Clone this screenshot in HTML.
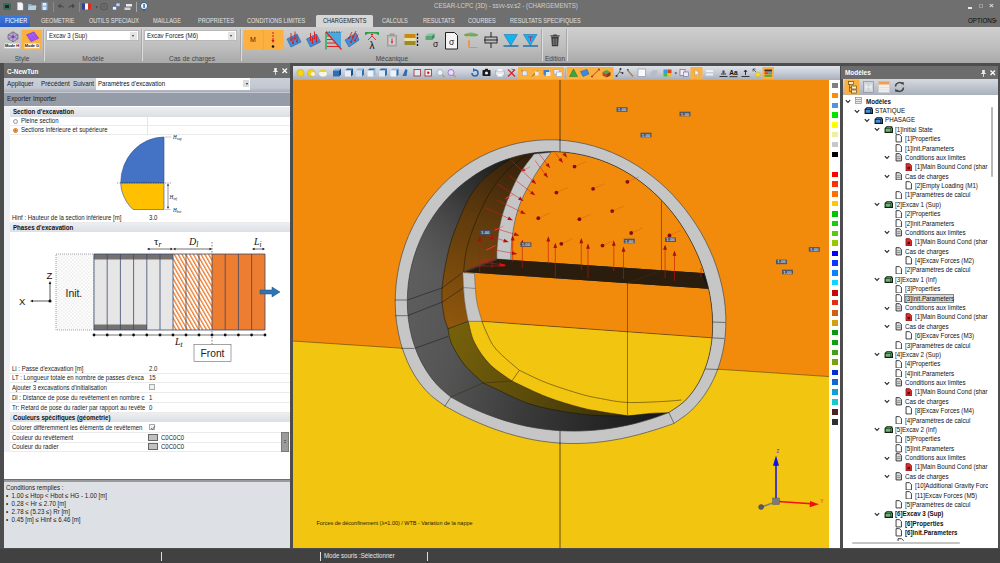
<!DOCTYPE html>
<html lang="fr">
<head>
<meta charset="utf-8">
<title>CESAR-LCPC (3D) - ssvv-sv.s2 - (CHARGEMENTS)</title>
<style>
*{box-sizing:border-box;margin:0;padding:0}
html,body{width:1000px;height:563px;overflow:hidden;background:#4b4b4b;font-family:"Liberation Sans",sans-serif;font-size:7px;color:#111}
.abs{position:absolute}
#app{position:relative;width:1000px;height:563px;overflow:hidden;background:#4d4d4d}
/* title + tabs */
#title{left:0;top:0;width:1000px;height:14px;background:#6f6f6f}
#tabs{left:0;top:14px;width:1000px;height:13px;background:#6f6f6f}
.tab{position:absolute;top:0;height:13px;line-height:13.5px;font-size:6.9px;color:#e4e4e4;white-space:nowrap;transform-origin:0 50%;transform:scaleX(.81)}
#ribbon{left:0;top:27px;width:1000px;height:36px;background:linear-gradient(#cfcfcf,#bebebe 55%,#a9a9a9)}
.rlabel{position:absolute;top:27.5px;font-size:6.6px;color:#444;white-space:nowrap;transform:translateX(-50%)}
.rsep{position:absolute;top:2px;width:1px;height:32px;background:#a8a8a8;box-shadow:1px 0 0 #dcdcdc}
.combo{position:absolute;top:2.5px;height:11.5px;background:#fff;border:0.5px solid #b8b8b8;font-size:7px;line-height:10.5px;padding-left:2px;white-space:nowrap;color:#222}
.combo span{display:inline-block;transform-origin:0 50%;transform:scaleX(.87)}
.combo i{position:absolute;right:1px;top:1.5px;width:7px;height:8px;background:#e4e4e4}
.combo i:after{content:"";position:absolute;left:2px;top:3px;border:1.5px solid transparent;border-top:2px solid #333}
/* panels */
.ptitle{position:absolute;height:14px;background:#6c6c6c;color:#fff;font-weight:bold;font-size:7px;line-height:14px;padding-left:2.5px;white-space:nowrap}
.ptitle span{display:inline-block;transform-origin:0 50%;transform:scaleX(.92)}

.sx{display:inline-block;transform-origin:0 50%;transform:scaleX(.9);white-space:nowrap}
.lt{position:absolute;font-size:7px;color:#1a1a1a;white-space:nowrap;transform-origin:0 50%;transform:scaleX(.9)}
.sh{position:absolute;left:7px;width:280px;height:9.5px;line-height:9.5px;background:linear-gradient(#eceef1,#dcdfe4);font-weight:bold;font-size:7px;padding-left:2.5px;white-space:nowrap;color:#111}
.row{position:absolute;left:9px;width:134px;height:9.5px;line-height:9.5px;font-size:6.7px;white-space:nowrap;overflow:hidden;color:#1a1a1a}
.val{position:absolute;left:146px;height:9.5px;line-height:9.5px;font-size:6.7px;color:#1a1a1a;transform-origin:0 50%;transform:scaleX(.9)}
.rad{display:inline-block;position:relative;left:1px;top:1px;width:5px;height:5px;border-radius:50%;border:.7px solid #999;background:#f4f4f4}
.rad.on{border-color:#c87820;background:radial-gradient(#e86a10 45%,#fbd9a0 55%)}
.chk{position:absolute;left:146px;width:6px;height:6px;border:.7px solid #aaa;background:#f0f0f0}
.sw{position:absolute;left:145px;width:10px;height:7px;border:.7px solid #666;background:#c0c0c0}
.info{font-size:6.7px;line-height:8.1px;color:#1a1a1a;white-space:nowrap;transform-origin:0 0;transform:scaleX(.92)}

.tt{position:absolute;font-size:6.7px;line-height:9.4px;height:9.4px;white-space:nowrap;color:#111;transform-origin:0 50%;transform:scaleX(.93)}
.ti{display:block}
#status{left:0;top:548.5px;width:1000px;height:14.5px;background:#414141}
</style>
</head>
<body>
<div id="app">
<div id="title" class="abs">
<svg class="abs" style="left:0;top:0" width="160" height="14" viewBox="0 0 160 14">
<rect x="3" y="3" width="8" height="7" rx="1.5" fill="#3c6b55"/><rect x="5" y="5" width="4" height="3" fill="#223"/>
<path d="M17.5 2.5h4l1.5 1.5v6h-5.5z" fill="#f4f6fa" stroke="#c8d0dc" stroke-width=".4"/>
<path d="M28 4h3l1 1h4v5h-8z" fill="#8fb0cc"/><path d="M29 6h7.5l-1 4H28z" fill="#b8d0e4"/>
<rect x="41.500" y="2.500" width="6" height="7.500" fill="#9fb6d6" stroke="#6c86ac" stroke-width=".5"/><rect x="43" y="3" width="3" height="2.500" fill="#e6eef8"/><rect x="43" y="7" width="3" height="3" fill="#dfe6f0"/>
<rect x="53" y="2" width="1" height="10" fill="#8a8a8a"/>
<path d="M57.500 6l3-2.500v1.700c2 0 3.500 1 3.500 3-1-1.200-2-1.500-3.500-1.500v1.800z" fill="#4c4c4c"/>
<path d="M75 6l-3-2.500v1.700c-2 0-3.500 1-3.500 3 1-1.200 2-1.500 3.500-1.500v1.800z" fill="#474747"/>
<rect x="79" y="2" width="1" height="10" fill="#8a8a8a"/>
<rect x="82" y="3.500" width="3" height="6" fill="#2b3f9e"/><rect x="85" y="3.500" width="3" height="6" fill="#f4f4f4"/><rect x="88" y="3.500" width="3" height="6" fill="#e0281e"/>
<path d="M95.500 6.500h2.400l-1.200 1.500z" fill="#333"/>
<circle cx="104" cy="6.500" r="3.200" fill="none" stroke="#5c5c5c" stroke-width="1.300"/><circle cx="104" cy="6.500" r="1" fill="#5a5a5a"/>
<rect x="112.500" y="6.500" width="4" height="3.500" fill="#f2f2f2" stroke="#55688c" stroke-width=".6"/><rect x="116" y="3" width="4" height="3.500" fill="#bcd2f0" stroke="#55688c" stroke-width=".6"/>
<rect x="126" y="4" width="6" height="2.500" fill="#e8eaee"/><rect x="124.500" y="7.500" width="6" height="2.500" fill="#d0d4dc"/>
<rect x="136" y="2" width="1" height="10" fill="#a8a8a8"/>
<circle cx="144" cy="6" r="3.600" fill="#f2f4f8" stroke="#2b5e92" stroke-width="1"/><rect x="143.400" y="4" width="1.300" height="4" fill="#1d4f88"/><path d="M143 9.500h2l-1 2z" fill="#1d4f88"/>
</svg>
<div class="abs" style="left:433.500px;top:2px;font-size:7px;color:#d0d0d0;white-space:nowrap;transform-origin:0 50%;transform:scaleX(.875)">CESAR-LCPC (3D) - ssvv-sv.s2 - (CHARGEMENTS)</div>
<div class="abs" style="left:968px;top:7px;width:4px;height:1.500px;background:#e8e8e8"></div>
<div class="abs" style="left:979px;top:4px;width:4px;height:4px;border:1px solid #9a9a9a;border-top-width:1.500px"></div>
<div class="abs" style="left:989px;top:1px;font-size:8px;color:#ddd;font-weight:bold">×</div>
</div>
<div id="tabs" class="abs">
<div class="abs" style="left:0;top:0.500px;width:30px;height:12.500px;background:linear-gradient(#3d7ae0,#2a5fc4);border-radius:1px 1px 0 0"></div>
<div class="abs" style="left:316px;top:1px;width:57px;height:13px;background:#d6d6d6;border-radius:1.500px 1.500px 0 0"></div>
<span class="tab" style="left:4.500px;color:#fff">FICHIER</span>
<span class="tab" style="left:41px;color:#e2e2e2">GEOMETRIE</span>
<span class="tab" style="left:89px;color:#e2e2e2">OUTILS SPECIAUX</span>
<span class="tab" style="left:153px;color:#e2e2e2">MAILLAGE</span>
<span class="tab" style="left:198px;color:#e2e2e2">PROPRIETES</span>
<span class="tab" style="left:247px;color:#e2e2e2">CONDITIONS LIMITES</span>
<span class="tab" style="left:323px;color:#222">CHARGEMENTS</span>
<span class="tab" style="left:382px;color:#e2e2e2">CALCULS</span>
<span class="tab" style="left:423px;color:#e2e2e2">RESULTATS</span>
<span class="tab" style="left:468px;color:#e2e2e2">COURBES</span>
<span class="tab" style="left:510px;color:#e2e2e2">RESULTATS SPECIFIQUES</span>
<span class="tab" style="left:968px;color:#0a0a0a;transform:scaleX(.9)">OPTIONS</span><span class="abs" style="left:995px;top:6px;border:1.500px solid transparent;border-top:2px solid #222"></span>
</div>
<div id="ribbon" class="abs">
<!-- Style group -->
<svg class="abs" style="left:0;top:0" width="45" height="26" viewBox="0 0 45 26">
<rect x="21.500" y="2.800" width="20.500" height="20" fill="#fbb040"/>
<g transform="translate(13,9.800)"><path d="M-5-2l5-3 5 3v4l-5 3-5-3z" fill="#b9a6d6" stroke="#555" stroke-width=".6"/><path d="M-5-2l10 4M5-2l-10 4M0-5v10" stroke="#555" stroke-width=".5"/><circle r="1.300" fill="#8a2be2"/></g>
<path d="M26.500 7.800l7.500-3 4.800 6.500-7.800 3.500z" fill="#9b4ff0" stroke="#7a36c8" stroke-width=".5"/><path d="M28.500 6.200l5 7M31 5.200l5 7M27.800 9.600l8-3" stroke="#b27af6" stroke-width=".4"/>
<rect x="4.500" y="16.500" width="15" height="4.800" fill="#f6f6f6"/><rect x="24.500" y="16.500" width="15" height="4.800" fill="#fff6e6"/>
<text x="12" y="20.400" font-size="3.900" font-weight="bold" text-anchor="middle" fill="#111" font-family="Liberation Sans, sans-serif">Mode H</text>
<text x="32" y="20.400" font-size="3.900" font-weight="bold" text-anchor="middle" fill="#111" font-family="Liberation Sans, sans-serif">Mode G</text>
</svg>
<span class="rlabel" style="left:22px">Style</span>
<div class="rsep" style="left:43px"></div>
<div class="combo" style="left:46px;width:93px"><span>Excav 3 (Sup)</span><i></i></div>
<span class="rlabel" style="left:93px">Modèle</span>
<div class="rsep" style="left:141px"></div>
<div class="combo" style="left:144px;width:93px"><span>Excav Forces (M6)</span><i></i></div>
<span class="rlabel" style="left:192px">Cas de charges</span>
<div class="rsep" style="left:240px"></div>
<!-- Mecanique group -->
<svg class="abs" style="left:240px;top:0" width="330" height="26" viewBox="0 0 330 26">
<rect x="3.500" y="3" width="40" height="20" fill="#fbb040"/><rect x="23" y="3" width=".6" height="20" fill="#f6a02c"/>
<text x="13" y="15" font-size="7" text-anchor="middle" fill="#4a2a00" font-family="Liberation Sans, sans-serif">M</text>
<path d="M33 5v9" stroke="#d01818" stroke-width="1" stroke-dasharray="2 1"/><path d="M31.500 13h3l-1.500 3z" fill="#d01818"/><circle cx="33" cy="19.500" r="1.300" fill="#111"/>
<g id="ld1"><path d="M47 12l10-5 4 8-10 5z" fill="#3f8fd8" stroke="#1c5fa8" stroke-width=".6"/><path d="M51 6v7M55 4.500v7M53 10v6M57 8.500v6" stroke="#e01818" stroke-width=".9"/><circle cx="51" cy="13" r="1" fill="#e01818"/><circle cx="55" cy="11.500" r="1" fill="#e01818"/><circle cx="53" cy="16" r="1" fill="#e01818"/><circle cx="57" cy="14.500" r="1" fill="#e01818"/></g>
<use href="#ld1" x="19.500"/>
<path d="M86 5h15v17z" fill="#49a8e0"/><path d="M86 5v17.500" stroke="#18b050" stroke-width="1.400"/><path d="M86 5l15.500 17.500" stroke="#e02020" stroke-width="1.200"/><path d="M86 5h15.500" stroke="#333" stroke-width=".8" stroke-dasharray="1.500 1"/><path d="M87 9h3M87 12.500h6M87 16h9M87 19.500h12" stroke="#e02020" stroke-width="1"/>
<g transform="translate(58,0)"><path d="M47 13l11-7 3 7-10 7z" fill="#3f8fd8" stroke="#1c5fa8" stroke-width=".6"/><path d="M54 5l-3 6M58 4l-3 6M56 9l-3 6M60 7.500l-3 6" stroke="#e01818" stroke-width=".9"/><circle cx="51" cy="11" r="1" fill="#e01818"/><circle cx="55" cy="10" r="1" fill="#e01818"/><circle cx="53" cy="15" r="1" fill="#e01818"/><circle cx="57" cy="13.500" r="1" fill="#e01818"/></g>
<path d="M125 5h14v3.500c-3-3-11-3-14 0z" fill="#2e9e4a"/><path d="M128 13l4-4 4 4" stroke="#e02020" stroke-width=".9" fill="none"/><circle cx="132" cy="7.500" r="1.100" fill="#e02020"/><text x="132" y="21.500" font-size="10" text-anchor="middle" fill="#111" font-family="Liberation Sans, sans-serif">λ</text>
<rect x="147.500" y="8.500" width="9" height="10.500" fill="#b4b4b4" stroke="#8a8a8a" stroke-width=".6"/><rect x="149.500" y="6.500" width="5" height="2" fill="#9a9a9a"/><rect x="149" y="10.500" width="6" height="7" fill="#d0d0d0"/><path d="M152 11.500v4" stroke="#e02020" stroke-width="1"/><path d="M150.700 14.500h2.600l-1.300 2.300z" fill="#e02020"/>
<rect x="164.500" y="7" width="11" height="4" fill="#c88a10"/><rect x="164.500" y="11" width="11" height="3" fill="#f0e0a0"/><rect x="164.500" y="14" width="11" height="4" fill="#9a8a28"/><path d="M177.500 6.500v12.500" stroke="#111" stroke-width="1.300" stroke-dasharray="2 1.500"/>
<path d="M185.500 9l3-2.500h6l-2.500 2.500z" fill="#7fc89a"/><path d="M185.500 9h6.500v4h-6.500z" fill="#5aa878"/><path d="M192 9l2.500-2.500v4L192 13z" fill="#3f8860"/><text x="195.500" y="19.500" font-size="8.500" text-anchor="middle" fill="#111" font-family="Liberation Sans, sans-serif">σ</text>
<path d="M205.500 5.500h9l3 3v13.500h-12z" fill="#f4f4f4" stroke="#222" stroke-width="1"/><text x="211.500" y="17.500" font-size="8.500" text-anchor="middle" fill="#111" font-family="Liberation Sans, sans-serif">σ</text>
<path d="M224 8c2-3.500 12-3.500 14 0l-2 1.500h-10z" fill="#5ac878"/><path d="M224 8h14" stroke="#c86040" stroke-width=".8"/><path d="M229 9v11" stroke="#d8c090" stroke-width="2"/><path d="M229 13v7" stroke="#f08030" stroke-width="1.200"/><path d="M229 20.500h8" stroke="#e08060" stroke-width=".8"/>
<rect x="245" y="10" width="12" height="6" fill="#bdbdbd" stroke="#222" stroke-width=".9"/><path d="M244 13h14M251 5v5M251 16v5" stroke="#222" stroke-width="1"/>
<g id="wt"><path d="M264 7.500h13.500l-6.750 11z" fill="#12b4f0" stroke="#1468a8" stroke-width=".5"/><path d="M263.500 19h15" stroke="#12609a" stroke-width="1.300"/></g>
<use href="#wt" x="19.500"/><path d="M288 10h5M290.500 10v4" stroke="#c02060" stroke-width=".8"/>
</svg>
<span class="rlabel" style="left:392px">Mécanique</span>
<div class="rsep" style="left:541px"></div>
<svg class="abs" style="left:547.500px;top:5.500px" width="14" height="15" viewBox="0 0 16 18"><path d="M3.500 4.500h9l-.8 11.500h-7.400z" fill="#3a3a3a"/><path d="M2.500 3.500h11" stroke="#222" stroke-width="1.200"/><path d="M6 2.500h4" stroke="#222" stroke-width="1.200"/><path d="M6 6.500v8M8 6.500v8M10 6.500v8" stroke="#bbb" stroke-width=".6"/></svg>
<span class="rlabel" style="left:555px">Edition</span>
<div class="rsep" style="left:566px"></div>
</div>
<div id="left" class="abs" style="left:4px;top:63px;width:286px;height:484.500px;overflow:hidden;background:#e1e4e8">
<div class="abs" style="left:-1px;top:0;width:287px;height:486px">
<div class="ptitle" style="left:1px;top:0;width:286px;height:15px;line-height:17px"><span>C-NewTun</span></div>
<svg class="abs" style="left:268.800px;top:3.500px" width="18" height="9" viewBox="0 0 18 9"><path d="M2.200 1h2.600v3h.9v.9h-1.800v3h-.8v-3h-1.800v-.9h.9z" fill="#eee"/><path d="M10.500 1.500l4.500 4.500M15 1.500l-4.500 4.500" stroke="#fff" stroke-width="1.200"/></svg>
<!-- toolbars -->
<div class="abs" style="left:0;top:15px;width:287px;height:14px;background:linear-gradient(#cbd0d8,#c2c7d0 70%,#a6acb8)"></div>
<div class="abs" style="left:0;top:28.500px;width:287px;height:15px;background:#959ca8;border-top:1.500px solid #c3c8d2;border-bottom:1.600px solid #676c72"></div>
<span class="lt" style="left:4px;top:17px">Appliquer</span>
<span class="lt" style="left:38px;top:17px">Précédent</span>
<span class="lt" style="left:70px;top:17px">Suivant</span>
<div class="abs" style="left:93px;top:15.400px;width:154px;height:11.600px;background:#fff;font-size:6.800px;line-height:12px;padding-left:2px;white-space:nowrap"><span class="sx">Paramètres d'excavation</span><i class="abs" style="right:1px;top:2px;width:6px;height:7px;background:#dcdcdc"></i><i class="abs" style="right:2.500px;top:5px;border:1.500px solid transparent;border-top:2px solid #222"></i></div>
<span class="lt" style="left:4px;top:32px">Exporter</span>
<span class="lt" style="left:30px;top:32px">Importer</span>
<!-- property grid -->
<div class="abs" style="left:0;top:43px;width:287px;height:373px;background:#fff;border-left:1px solid #8c8c8c"></div>
<div class="abs" style="left:1px;top:43px;width:6px;height:346px;background:#eef0f3"></div>
<div class="abs" style="left:7px;top:62.3px;width:280px;height:.6px;background:#ebebeb"></div><div class="abs" style="left:7px;top:71.3px;width:280px;height:.6px;background:#ebebeb"></div><div class="abs" style="left:7px;top:158.8px;width:280px;height:.6px;background:#ebebeb"></div><div class="abs" style="left:7px;top:309.8px;width:280px;height:.6px;background:#ebebeb"></div><div class="abs" style="left:7px;top:319.3px;width:280px;height:.6px;background:#ebebeb"></div><div class="abs" style="left:7px;top:328.8px;width:280px;height:.6px;background:#ebebeb"></div><div class="abs" style="left:7px;top:338.8px;width:280px;height:.6px;background:#ebebeb"></div><div class="abs" style="left:7px;top:348.8px;width:280px;height:.6px;background:#ebebeb"></div><div class="abs" style="left:7px;top:368.8px;width:280px;height:.6px;background:#ebebeb"></div><div class="abs" style="left:7px;top:378.8px;width:280px;height:.6px;background:#ebebeb"></div><div class="abs" style="left:7px;top:388.3px;width:280px;height:.6px;background:#ebebeb"></div>
<div class="sh" style="top:44px"><span class="sx" style="transform:scaleX(.88)">Section d'excavation</span></div>
<div class="row" style="top:53px"><i class="rad"></i><span class="sx" style="margin-left:3.500px">Pleine section</span></div>
<div class="row" style="top:62px"><i class="rad on"></i><span class="sx" style="margin-left:3.500px">Sections inférieure et supérieure</span></div>
<div class="abs" style="left:144px;top:53px;width:1px;height:19px;background:#e6e6e6"></div>
<!-- section figure -->
<svg class="abs" style="left:97px;top:70px" width="100" height="82" viewBox="100 133 100 82">
<path d="M164 137 A43.500 46 0 0 0 120.700 183 H164z" fill="#4472c4" stroke="#2f528f" stroke-width=".6"/>
<path d="M120.700 183 C121 193 126 203 133 209.500 H164 V183z" fill="#ffc000" stroke="#2f528f" stroke-width=".6"/>
<path d="M117 183h55" stroke="#333" stroke-width=".5" stroke-dasharray="1.200 1.200"/>
<path d="M165.500 137h5M165.500 209.500h5" stroke="#333" stroke-width=".5" stroke-dasharray="1 1"/>
<path d="M168 184.500v23.500" stroke="#222" stroke-width=".5"/><path d="M168 183.500l-1 2.200h2zM168 209l-1-2.200h2z" fill="#222"/>
<text x="173" y="139" font-size="5.200" font-style="italic" font-family="Liberation Serif, serif" fill="#222">H<tspan font-size="3.600" dy="1">sup</tspan></text>
<text x="169.500" y="198.500" font-size="5.200" font-style="italic" font-family="Liberation Serif, serif" fill="#222">H<tspan font-size="3.600" dy="1">inf</tspan></text>
<text x="173" y="211.500" font-size="5.200" font-style="italic" font-family="Liberation Serif, serif" fill="#222">H<tspan font-size="3.600" dy="1">bot</tspan></text>
</svg>
<div class="row" style="top:149.500px"><span class="sx">Hinf : Hauteur de la section inférieure [m]</span></div><span class="val" style="top:149.500px">3.0</span>
<div class="sh" style="top:159.500px"><span class="sx" style="transform:scaleX(.88)">Phases d'excavation</span></div>
<!-- phases diagram -->
<svg class="abs" style="left:10px;top:170px" width="275" height="130" viewBox="13 233 275 130" font-family="Liberation Sans, sans-serif">
<defs>
<pattern id="dots" width="3.600" height="3.600" patternUnits="userSpaceOnUse"><rect width="3.600" height="3.600" fill="#fff"/><circle cx=".9" cy=".9" r=".42" fill="#888"/><circle cx="2.700" cy="2.700" r=".42" fill="#888"/></pattern>
<pattern id="hat" width="3.300" height="3.300" patternUnits="userSpaceOnUse" patternTransform="rotate(-30)"><rect width="3.300" height="3.300" fill="#fff"/><rect width="1.350" height="3.300" fill="#ed7d31"/></pattern>
</defs>
<rect x="56" y="254" width="38" height="76" fill="url(#dots)" stroke="#445" stroke-width=".5" stroke-dasharray="1 1"/>
<rect x="94" y="254" width="79" height="76" fill="#e7e6e6"/>
<rect x="94" y="254" width="79" height="5.500" fill="#767171"/><rect x="94" y="324.500" width="53" height="5.500" fill="#767171"/>
<rect x="173" y="254" width="39" height="76" fill="url(#hat)"/>
<rect x="212" y="254" width="53" height="76" fill="#ed7d31"/>
<path d="M94 254v76M107.200 254v76M120.400 254v76M133.600 254v76M146.800 254v76M160 254v76M173 254v76M186 254v76M199 254v76M212 254v76M225.200 254v76M238.400 254v76M251.600 254v76M265 254v76M94 254h171M94 330h171" stroke="#3b4a6b" stroke-width=".8" fill="none"/>
<path d="M212 242v12M212 331v14" stroke="#222" stroke-width=".6" stroke-dasharray="1.500 1.500"/>
<g stroke="#111" stroke-width=".6"><path d="M148.500 249h23M174.500 249h36M253.500 249h10"/></g>
<g fill="#111"><path d="M147 249l2.500-1.200v2.400zM173 249l-2.500-1.200v2.400zM173 249l2.500-1.200v2.400zM212 249l-2.500-1.200v2.400zM252 249l2.500-1.200v2.400zM265 249l-2.500-1.200v2.400z"/></g>
<g font-family="Liberation Serif, serif" font-style="italic" fill="#111" font-size="10"><text x="154" y="245" font-style="normal" font-size="11">τ<tspan font-style="italic" font-size="7.500" dy="1.500">r</tspan></text><text x="189" y="245">D<tspan font-size="7.500" dy="1.500">l</tspan></text><text x="254" y="245">L<tspan font-size="7.500" dy="1.500">i</tspan></text><text x="175" y="345">L<tspan font-size="7.500" dy="1.500">t</tspan></text></g>
<path d="M94 335h171" stroke="#111" stroke-width=".6"/>
<g fill="#111"><circle cx="94" cy="335" r="1.400"/><circle cx="107.200" cy="335" r="1.400"/><circle cx="120.400" cy="335" r="1.400"/><circle cx="133.600" cy="335" r="1.400"/><circle cx="146.800" cy="335" r="1.400"/><circle cx="160" cy="335" r="1.400"/><circle cx="173" cy="335" r="1.400"/><circle cx="186" cy="335" r="1.400"/><circle cx="199" cy="335" r="1.400"/><circle cx="212" cy="335" r="1.400"/><circle cx="225.200" cy="335" r="1.400"/><circle cx="238.400" cy="335" r="1.400"/><circle cx="251.600" cy="335" r="1.400"/><circle cx="265" cy="335" r="1.400"/></g>
<rect x="194" y="344.500" width="37" height="17" fill="#fff" stroke="#666" stroke-width=".6"/>
<text x="212.500" y="356.700" font-size="10.200" text-anchor="middle" fill="#222">Front</text>
<text x="65.500" y="297" font-size="10.400" fill="#222">Init.</text>
<text x="46.500" y="279" font-size="9.500" fill="#111">Z</text><text x="19" y="304.500" font-size="9.500" fill="#111">X</text>
<path d="M50 301v-17M50 301h-17" stroke="#111" stroke-width=".7"/><circle cx="50" cy="301" r="1.600" fill="#111"/><path d="M50 281l-1.300 3h2.600zM30 301l3-1.300v2.600z" fill="#111"/>
<path d="M260 290h12v-3l8 5-8 5v-3h-12z" fill="#2e75b6" stroke="#1f4e79" stroke-width=".5"/>
</svg>
<div class="row" style="top:300.500px"><span class="sx">Li : Passe d'excavation [m]</span></div><span class="val" style="top:300.500px">2.0</span>
<div class="row" style="top:310px"><span class="sx">LT : Longueur totale en nombre de passes d'exca</span></div><span class="val" style="top:310px">15</span>
<div class="row" style="top:319.500px"><span class="sx">Ajouter 3 excavations d'initialisation</span></div><i class="chk" style="top:321px"></i>
<div class="row" style="top:329.500px"><span class="sx">Dl : Distance de pose du revêtement en nombre c</span></div><span class="val" style="top:329.500px">1</span>
<div class="row" style="top:339.500px"><span class="sx">Tr: Retard de pose du radier par rapport au revête</span></div><span class="val" style="top:339.500px">0</span>
<div class="sh" style="top:349.500px"><span class="sx" style="transform:scaleX(.88)">Couleurs spécifiques (géometrie)</span></div>
<div class="row" style="top:359.500px"><span class="sx">Colorer différemment les éléments de revêtemen</span></div><i class="chk" style="top:361px"><svg width="6" height="6" viewBox="0 0 6 6" style="position:absolute;left:0;top:0"><path d="M1 3l1.500 1.500L5 1" stroke="#555" stroke-width=".8" fill="none"/></svg></i>
<div class="row" style="top:369.500px"><span class="sx">Couleur du révêtement</span></div><i class="sw" style="top:370.500px"></i><span class="val" style="top:369.500px;left:158px">C0C0C0</span>
<div class="row" style="top:379px"><span class="sx">Couleur du radier</span></div><i class="sw" style="top:380px"></i><span class="val" style="top:379px;left:158px">C0C0C0</span>
<div class="abs" style="left:278px;top:369px;width:8px;height:19.500px;background:#9b9b9b;border:1px solid #7a7a7a"></div>
<div class="abs" style="left:281px;top:377px;width:2px;height:3px;border-top:1px solid #666;border-bottom:1px solid #666"></div>
<!-- info -->
<div class="abs" style="left:0;top:416px;width:287px;height:3px;background:#9a9a9a;border-top:1px solid #6e6e6e"></div>
<div class="abs" style="left:0;top:419px;width:287px;height:66px;background:#dde1e6;border-left:1px solid #8c8c8c"></div>
<div class="abs info" style="left:3px;top:420.500px">Conditions remplies :<br>•&nbsp; 1.00 ≤ Htop &lt; Hbot ≤ HG - 1.00 [m]<br>•&nbsp; 0.28 &lt; Hr ≤ 2.70 [m]<br>•&nbsp; 2.78 ≤ (5.23 ≤) Rr [m]<br>•&nbsp; 0.45 [m] ≤ Hinf ≤ 6.46 [m]</div>
</div>
</div>
<div id="view" class="abs" style="left:292.500px;top:66px;width:547.500px;height:482.400px;overflow:hidden;background:#fff">
<div class="abs" style="left:0;top:0;width:547.500px;height:14px;background:linear-gradient(#dfe3e9,#c3c9d3 55%,#a7aebb)"></div>
<svg class="abs" style="left:0;top:0" width="547.500" height="14" viewBox="292.500 66 547.500 14">
<circle cx="300" cy="73" r="3.600" fill="#f6d21c" stroke="#c8a010" stroke-width=".5"/>
<circle cx="310.7" cy="73" r="3.600" fill="#f6d21c" stroke="#c8a010" stroke-width=".5"/><circle cx="312.500" cy="74" r="2" fill="#f4f4f4"/>
<ellipse cx="322.500" cy="73.500" rx="4.300" ry="3.400" fill="#f4f4f0" stroke="#b0b0a0" stroke-width=".5"/><path d="M319 72a3.500 2.500 0 0 1 7 0" fill="#f0d020"/>
<path d="M332.5 70.5l2-2h6l-2 2z" fill="#8fb8e0"/><rect x="332.5" y="70.500" width="6" height="6" fill="#2e6fb4"/><path d="M338.5 70.500l2-2v6l-2 2z" fill="#1c4a80"/>
<path d="M344.5 70.5l2-2h6l-2 2z" fill="#2e6fb4"/><rect x="344.5" y="70.500" width="6" height="6" fill="#e8eef6"/><path d="M350.5 70.500l2-2v6l-2 2z" fill="#1c4a80"/>
<path d="M355.5 70.5l2-2h6l-2 2z" fill="#8fb8e0"/><rect x="355.5" y="70.500" width="6" height="6" fill="#cfdcec"/><path d="M361.5 70.500l2-2v6l-2 2z" fill="#2e6fb4"/>
<path d="M367 70.5l2-2h6l-2 2z" fill="#2e6fb4"/><rect x="367" y="70.500" width="6" height="6" fill="#f0f4f8"/><path d="M373 70.500l2-2v6l-2 2z" fill="#8fb8e0"/>
<path d="M378.5 70.5l2-2h6l-2 2z" fill="#2e6fb4"/><rect x="378.5" y="70.500" width="6" height="6" fill="#e0e8f2"/><path d="M384.5 70.500l2-2v6l-2 2z" fill="#2e6fb4"/>
<path d="M390 70.5l2-2h6l-2 2z" fill="#8fb8e0"/><rect x="390" y="70.500" width="6" height="6" fill="#f0f4f8"/><path d="M396 70.500l2-2v6l-2 2z" fill="#2e6fb4"/>
<path d="M402 76l3-7 2 1-1 6z" fill="#2e6fb4"/>
<rect x="413.500" y="69.500" width="6.500" height="6.500" fill="#dce8f4" stroke="#a02828" stroke-width=".8"/>
<rect x="424.500" y="69.500" width="6.500" height="6.500" fill="#f4e8e8" stroke="#a02828" stroke-width=".8"/><circle cx="427.750" cy="72.750" r="1.200" fill="#e01010"/>
<circle cx="439.500" cy="72.500" r="3" fill="#e8f0f8" stroke="#9aaac0" stroke-width=".8"/><path d="M441.800 74.800l2.200 2.200" stroke="#c89040" stroke-width="1.100"/>
<circle cx="450.500" cy="72.500" r="3" fill="#e8e0f8" stroke="#9a70c8" stroke-width=".9"/><path d="M452.800 74.800l2.200 2.200" stroke="#c89040" stroke-width="1.100"/>
<path d="M471.500 73a3 3 0 1 0 3-3" fill="none" stroke="#2a6ab0" stroke-width="1.500"/><path d="M472.500 68l3 2-3 2z" fill="#2a6ab0"/>
<rect x="482" y="70" width="8" height="6" rx=".8" fill="#1a1a1a"/><rect x="484.500" y="68.800" width="3" height="1.500" fill="#1a1a1a"/><circle cx="486" cy="73" r="1.600" fill="#e8e8e8"/>
<rect x="495" y="71" width="9" height="4.500" fill="#e4e8ee" stroke="#9098a8" stroke-width=".5"/><rect x="497" y="69" width="5" height="2" fill="#f8f8f8"/><rect x="497" y="74" width="5" height="2.500" fill="#fafafa"/>
<path d="M507.500 69.500l7 7M514.500 69.500l-7 7" stroke="#d82020" stroke-width="1.200"/><path d="M511 69l3 1" stroke="#555" stroke-width=".8"/>
<rect x="517.600" y="67" width="46" height="12" fill="#fbb040"/>
<rect x="522" y="71" width="4.500" height="4.500" fill="#e4ecf6" stroke="#8aa0c0" stroke-width=".5"/><circle cx="521.500" cy="70.500" r="1" fill="#c89030"/>
<path d="M531.500 76.500l6-6" stroke="#7a5a20" stroke-width="1"/><rect x="534.500" y="71.500" width="3.500" height="4" fill="#e4ecf6"/>
<path d="M543 70h5.500v4.500h-3l-1.500 2v-2H543z" fill="#3a80d0"/><rect x="545.500" y="72" width="4.500" height="4" fill="#dce8f6"/>
<rect x="553.500" y="69.500" width="5.500" height="4.500" fill="#e8eef6" stroke="#8aa0c0" stroke-width=".5"/><rect x="556" y="72" width="5.500" height="4.500" fill="#f4f6fa" stroke="#8aa0c0" stroke-width=".5"/>
<rect x="564.300" y="68" width=".7" height="10" fill="#8f98a8"/>
<rect x="566" y="67" width="47" height="12" fill="#fbb040"/>
<path d="M569 76.500l4-7.500 4 7.500z" fill="#38a838" stroke="#1c7020" stroke-width=".5"/>
<path d="M580 71.500l6.500-2 2 4.500-6 2.500z" fill="#3a8ae0" stroke="#1c5cb0" stroke-width=".5"/>
<path d="M591.500 76.500l7-7" stroke="#a83820" stroke-width=".9"/><circle cx="591.500" cy="76.500" r=".9" fill="#c82020"/><circle cx="598.500" cy="69.500" r=".9" fill="#c82020"/>
<path d="M602 72l4-2 4 2-4 2z" fill="#48a848"/><path d="M602 72v3.500l4 2V74z" fill="#c84030"/><path d="M610 72v3.500l-4 2V74z" fill="#8a3020"/>
<path d="M616 76l3-4 3 1M619 72l1-3" stroke="#555" stroke-width=".8" fill="none"/><circle cx="616" cy="76" r="1" fill="#333"/><circle cx="622" cy="73" r="1" fill="#333"/><circle cx="620" cy="69" r="1" fill="#333"/>
<path d="M626.500 69.500l6 7" stroke="#b07848" stroke-width="1.200"/><path d="M626.500 69.500l2 .5" stroke="#555" stroke-width="1"/>
<rect x="637.500" y="69" width="7.500" height="7.500" fill="#fafafa" stroke="#9aa2b0" stroke-width=".8"/>
<path d="M650 76v-4l3-2h4v4l-3 2z" fill="#b4bac4" opacity=".8"/>
<rect x="663" y="69.500" width="4" height="3.500" fill="#30a0e0"/><rect x="667" y="69.500" width="4" height="3.500" fill="#e04020"/><rect x="663" y="73" width="4" height="3.500" fill="#40c040"/><rect x="667" y="73" width="4" height="3.500" fill="#f0c020"/>
<path d="M674 72.500h2.600l-1.300 1.800z" fill="#333"/>
<rect x="679.500" y="69.500" width="5" height="6" fill="#f0f0f4" stroke="#a04060" stroke-width=".6"/><rect x="683" y="72" width="5" height="4.500" fill="#e8ecf4" stroke="#6070a0" stroke-width=".6"/>
<rect x="690" y="67" width="12" height="12" fill="#fbb040"/><path d="M694.500 69.500v6l1.500-1.300 1.200 2.500 1-.5-1.200-2.400h2z" fill="#f4f8ff" stroke="#7090c0" stroke-width=".4"/>
<rect x="705.500" y="70" width="7" height="2" fill="#eef0f4"/><rect x="705.500" y="73.500" width="7" height="2" fill="#eef0f4"/>
<path d="M719 76.500h8M720.500 74h5" stroke="#222" stroke-width=".9"/><rect x="722" y="70.500" width="2" height="3" fill="#444"/>
<text x="733" y="75" font-size="6.500" font-weight="bold" text-anchor="middle" fill="#111" font-family="Liberation Sans, sans-serif">Aa</text><path d="M729 76.700h8" stroke="#111" stroke-width=".8"/>
<path d="M741 76.500h8M745 70v5M743.500 72l1.500-2 1.500 2" stroke="#222" stroke-width=".9" fill="none"/>
<circle cx="757.500" cy="74.500" r="2.300" fill="#f4e020" stroke="#c0a010" stroke-width=".4"/><path d="M752.500 69l3 3M752.500 69h2.500M752.500 69v2.500" stroke="#444" stroke-width=".8" fill="none"/>
<rect x="762" y="67" width="11.500" height="12" fill="#fbb040"/><rect x="764" y="69.500" width="7.500" height="2" fill="#333"/><rect x="764" y="72.200" width="4" height="2" fill="#e04020"/><rect x="768" y="72.200" width="3.500" height="2" fill="#30a0e0"/><rect x="764" y="74.800" width="7.500" height="2" fill="#40b040"/>
</svg>
<svg class="abs" style="left:0;top:14px" width="536.500" height="467.800" viewBox="292.500 80 536.500 467.800" font-family="Liberation Sans, sans-serif">
<defs>
<linearGradient id="gdg" gradientUnits="userSpaceOnUse" x1="400" y1="300" x2="690" y2="380"><stop offset="0" stop-color="#5e5e5e"/><stop offset=".22" stop-color="#545454"/><stop offset=".5" stop-color="#3a3a3a"/><stop offset="1" stop-color="#121212"/></linearGradient>
<linearGradient id="gdt" gradientUnits="userSpaceOnUse" x1="520" y1="150" x2="440" y2="280"><stop offset="0" stop-color="#101010" stop-opacity=".95"/><stop offset=".45" stop-color="#202020" stop-opacity=".6"/><stop offset="1" stop-color="#404040" stop-opacity="0"/></linearGradient>
<linearGradient id="gbr" gradientUnits="userSpaceOnUse" x1="520" y1="155" x2="455" y2="325"><stop offset="0" stop-color="#33200c"/><stop offset=".4" stop-color="#5e3a0c"/><stop offset="1" stop-color="#8f560c"/></linearGradient>
<linearGradient id="gol" gradientUnits="userSpaceOnUse" x1="455" y1="330" x2="620" y2="415"><stop offset="0" stop-color="#75600a"/><stop offset=".5" stop-color="#5c4c0a"/><stop offset="1" stop-color="#3a300a"/></linearGradient>
<clipPath id="cin"><path d="M450.3 397.1C448.1 395.1 441.0 389.5 436.9 385.1C432.8 380.8 429.2 375.9 425.9 370.8C422.7 365.7 419.8 360.3 417.4 354.7C415.0 349.2 413.0 343.3 411.4 337.5C409.9 331.6 408.7 325.5 407.9 319.5C407.1 313.5 406.8 307.3 406.8 301.3C406.8 295.2 407.2 289.1 407.9 283.0C408.6 277.0 409.8 271.0 411.2 265.1C412.7 259.2 414.5 253.3 416.6 247.7C418.8 242.0 421.2 236.4 424.0 231.0C426.8 225.7 429.9 220.4 433.4 215.4C436.8 210.4 440.5 205.6 444.5 201.0C448.4 196.5 452.7 192.2 457.2 188.1C461.7 184.1 466.5 180.3 471.5 176.9C476.4 173.5 481.6 170.3 487.0 167.6C492.3 164.8 497.8 162.3 503.5 160.3C509.1 158.2 514.9 156.5 520.7 155.2C526.5 153.8 532.5 152.9 538.4 152.3C544.3 151.7 550.3 151.5 556.2 151.7C562.1 151.9 568.1 152.5 573.9 153.4C579.7 154.3 585.5 155.6 591.1 157.2C596.7 158.8 602.2 160.7 607.6 163.0C612.9 165.2 618.1 167.8 623.1 170.6C628.2 173.4 633.0 176.5 637.7 179.9C642.3 183.2 646.8 186.8 651.0 190.6C655.3 194.4 659.3 198.4 663.2 202.5C667.0 206.7 670.7 211.1 674.1 215.6C677.5 220.1 680.8 224.8 683.8 229.7C686.8 234.5 689.6 239.5 692.2 244.6C694.8 249.8 697.2 255.1 699.4 260.5C701.5 265.9 703.5 271.5 705.1 277.2C706.8 282.8 708.2 288.7 709.3 294.6C710.4 300.6 711.3 306.7 711.7 312.8C712.2 319.0 712.3 325.2 712.0 331.5C711.7 337.8 711.0 344.1 709.7 350.4C708.5 356.6 706.8 362.9 704.5 368.8C702.2 374.8 699.5 380.8 696.0 386.2C692.6 391.6 688.6 396.8 684.0 401.2C679.4 405.6 670.9 410.7 668.3 412.6C665.5 413.6 657.2 416.8 651.6 418.6C646.0 420.4 640.4 422.0 634.8 423.4C629.2 424.7 623.6 426.0 618.0 427.0C612.5 428.0 606.9 428.9 601.3 429.5C595.7 430.1 590.1 430.6 584.5 430.8C578.9 431.1 573.3 431.2 567.7 431.0C562.1 430.9 556.5 430.5 550.9 430.0C545.3 429.4 539.7 428.7 534.1 427.7C528.5 426.8 522.9 425.6 517.3 424.2C511.7 422.8 506.1 421.2 500.6 419.4C495.0 417.6 489.4 415.5 483.8 413.3C478.2 411.0 472.6 408.6 467.0 405.9C461.4 403.2 453.1 398.5 450.3 397.1Z"/></clipPath>
</defs>
<rect x="292" y="80" width="537" height="469" fill="#f28b0b"/>
<path d="M292 341L829 376.600V549H292z" fill="#f2c511"/>
<path d="M292 341L829 376.600" stroke="#3a2a10" stroke-width=".5" fill="none"/>
<path d="M559.500 80V549" stroke="#2a1a08" stroke-width=".7"/>
<path d="M444.5 406.0C441.9 404.0 433.6 398.6 428.9 394.0C424.2 389.5 420.0 384.3 416.3 378.8C412.6 373.4 409.5 367.4 406.8 361.4C404.1 355.4 401.9 349.1 400.1 342.7C398.4 336.3 397.1 329.7 396.2 323.2C395.3 316.6 394.8 309.9 394.7 303.3C394.7 296.7 395.0 290.0 395.7 283.4C396.4 276.9 397.5 270.3 399.0 263.8C400.5 257.4 402.3 251.0 404.5 244.8C406.7 238.5 409.3 232.4 412.3 226.5C415.2 220.6 418.5 214.8 422.2 209.2C425.8 203.7 429.8 198.4 434.1 193.3C438.4 188.3 443.0 183.5 447.9 179.1C452.8 174.6 458.0 170.5 463.4 166.7C468.9 163.0 474.6 159.5 480.4 156.5C486.3 153.5 492.4 150.8 498.5 148.6C504.7 146.4 511.1 144.6 517.4 143.2C523.8 141.8 530.3 140.9 536.8 140.3C543.2 139.8 549.8 139.7 556.2 139.9C562.7 140.2 569.1 140.9 575.4 142.0C581.7 143.0 588.0 144.5 594.0 146.3C600.1 148.1 606.1 150.2 611.9 152.7C617.7 155.1 623.4 158.0 628.8 161.0C634.3 164.1 639.6 167.4 644.6 171.0C649.7 174.6 654.6 178.5 659.3 182.5C664.0 186.6 668.5 190.9 672.7 195.4C677.0 199.9 681.0 204.6 684.9 209.6C688.7 214.5 692.3 219.6 695.7 224.8C699.1 230.1 702.3 235.6 705.2 241.3C708.0 246.9 710.7 252.7 713.1 258.7C715.4 264.7 717.5 270.9 719.2 277.2C721.0 283.5 722.4 290.0 723.4 296.6C724.4 303.1 725.1 309.9 725.3 316.6C725.5 323.3 725.3 330.2 724.6 337.0C723.9 343.8 722.7 350.7 720.9 357.4C719.2 364.0 716.9 370.7 714.1 377.0C711.2 383.3 707.8 389.5 703.8 395.2C699.9 400.8 695.3 406.3 690.2 411.0C685.2 415.7 676.3 421.3 673.6 423.4C670.6 424.4 661.8 427.6 655.9 429.4C650.0 431.3 644.1 433.0 638.2 434.6C632.3 436.1 626.5 437.5 620.6 438.7C614.7 439.8 608.8 440.8 602.9 441.6C597.1 442.3 591.2 442.9 585.3 443.2C579.4 443.5 573.5 443.6 567.7 443.5C561.8 443.3 555.9 442.9 550.0 442.3C544.2 441.7 538.3 440.8 532.4 439.7C526.5 438.6 520.6 437.2 514.8 435.6C508.9 434.1 503.0 432.2 497.1 430.2C491.2 428.2 485.4 425.9 479.5 423.4C473.6 420.9 467.7 418.3 461.8 415.4C456.0 412.5 447.4 407.6 444.5 406.0Z" fill="#c6c6c6" stroke="#4a4a4a" stroke-width=".7"/>
<path d="M559.500 139V152M559.500 430V444" stroke="#222" stroke-width=".7"/>
<g clip-path="url(#cin)">
<rect x="390" y="135" width="340" height="315" fill="url(#gdg)"/>
<rect x="390" y="135" width="340" height="315" fill="url(#gdt)"/>
<path d="M508.7 159.7C505.0 162.4 492.8 170.1 486.4 176.0C480.0 181.9 475.3 186.8 470.3 195.0C465.3 203.2 460.0 216.2 456.3 225.4C452.6 234.6 450.5 240.9 448.2 250.0C445.9 259.1 443.6 271.7 442.5 280.0C441.4 288.3 441.2 293.7 441.5 300.0C441.8 306.3 443.0 313.2 444.0 318.0C445.0 322.8 446.9 327.0 447.5 328.8L467.7 321.300C467.1 317.8 464.9 308.1 464.0 300.0C463.1 291.9 462.6 277.1 462.3 272.5L496.400 259C496.4 257.2 496.1 253.6 496.6 248.0C497.1 242.4 497.8 233.2 499.4 225.4C501.0 217.6 503.3 209.7 506.5 201.3C509.7 192.9 514.0 182.9 518.5 175.0C523.0 167.1 531.1 157.5 533.6 154.0L520 153Z" fill="url(#gbr)"/>
<path d="M447.5 328.8C448.0 331.1 448.0 336.7 450.6 342.6C453.2 348.5 458.1 357.3 463.4 364.0C468.7 370.7 479.4 379.8 482.6 383.0C485.5 384.3 493.8 388.1 500.0 391.0C506.2 393.9 513.3 397.8 520.0 400.5C526.7 403.2 533.3 405.2 540.0 407.0C546.7 408.8 553.3 409.8 560.0 411.0C566.7 412.2 573.3 413.2 580.0 414.0C586.7 414.8 592.2 415.3 600.0 415.6C607.8 415.9 622.5 415.8 627.0 415.8L626 415.600C621.7 414.9 607.7 412.9 600.0 411.5C592.3 410.1 588.9 409.9 580.0 407.5C571.1 405.1 557.9 401.4 546.5 397.0C535.1 392.6 517.2 383.7 511.4 381.0C507.7 378.2 495.2 370.4 489.0 364.0C482.8 357.6 477.6 349.7 474.0 342.6C470.4 335.5 468.8 324.9 467.7 321.3Z" fill="url(#gol)"/>
<path d="M467.7 321.3C468.8 324.9 470.4 335.5 474.0 342.6C477.6 349.7 482.8 357.6 489.0 364.0C495.2 370.4 507.7 378.2 511.4 381.0C517.2 383.7 535.1 392.6 546.5 397.0C557.9 401.4 571.1 405.1 580.0 407.5C588.9 409.9 592.3 410.1 600.0 411.5C607.7 412.9 621.7 414.9 626.0 415.6L627 415.800L650 413.400L668.400 412.700L730 400L730 339L481.500 321.300L467.700 321.300Z" fill="#f2c511"/>
<path d="M462.300 272L707.600 288.800L730 290L730 339.200L481.500 321.300L467.700 321.300C467.1 317.8 464.9 308.1 464.0 300.0C463.1 291.9 462.6 277.1 462.3 272.5Z" fill="#f28b0b"/>
<path d="M550.600 152.300C547.9 156.1 539.6 166.8 534.6 175.0C529.6 183.2 524.0 192.9 520.5 201.3C517.0 209.7 515.1 217.6 513.5 225.4C511.9 233.2 511.2 242.2 510.7 248.0C510.2 253.8 510.4 258.0 510.3 260.0L730 275L730 130L550 130Z" fill="#f28b0b"/>
<path d="M533.6 154.0C531.1 157.5 523.0 167.1 518.5 175.0C514.0 182.9 509.7 192.9 506.5 201.3C503.3 209.7 501.0 217.6 499.4 225.4C497.8 233.2 497.1 242.4 496.6 248.0C496.1 253.6 496.4 257.2 496.4 259.0L510.300 260C510.4 258.0 510.2 253.8 510.7 248.0C511.2 242.2 511.9 233.2 513.5 225.4C515.1 217.6 517.0 209.7 520.5 201.3C524.0 192.9 529.6 183.2 534.6 175.0C539.6 166.8 547.9 156.1 550.6 152.3Z" fill="#c6c6c6" stroke="#555" stroke-width=".5"/>
<path d="M462.3 272.5C462.6 277.1 463.1 291.9 464.0 300.0C464.9 308.1 467.1 317.8 467.7 321.3L481.500 321.300C480.6 317.8 477.2 308.0 476.0 300.0C474.8 292.0 474.3 277.9 474.0 273.5Z" fill="#c6c6c6" stroke="#555" stroke-width=".5"/>
<path d="M462.500 287.500L475 288.500" stroke="#555" stroke-width=".5"/>
<g fill="none" stroke="#3a2a10" stroke-width=".55">
<path d="M481.500 321.300L711 337.800"/>
<path d="M481.5 321.3C482.2 323.1 483.5 327.4 485.8 332.0C488.1 336.6 489.9 342.6 495.4 349.0C500.9 355.4 514.9 366.8 518.8 370.3C523.4 372.4 536.3 379.1 546.5 383.0C556.7 386.9 571.1 391.4 580.0 394.0C588.9 396.6 592.3 397.1 600.0 398.5C607.7 399.9 616.0 401.9 626.0 402.4C636.0 402.9 650.8 402.0 660.0 401.6C669.2 401.2 677.5 400.3 681.0 400.0"/>
<path d="M467.7 321.3C468.8 324.9 470.4 335.5 474.0 342.6C477.6 349.7 482.8 357.6 489.0 364.0C495.2 370.4 507.7 378.2 511.4 381.0C517.2 383.7 535.1 392.6 546.5 397.0C557.9 401.4 571.1 405.1 580.0 407.5C588.9 409.9 592.3 410.1 600.0 411.5C607.7 412.9 621.7 414.9 626.0 415.6"/>
<path d="M511.400 381L518.800 370.300M482.600 383L511.400 381M450.200 397.200L482.600 383"/>
<path d="M627 283V415.500"/>
<path d="M661 201V270.500"/>
<path d="M407 300L441.500 288L462.300 272.500M407 315.700L442 302L462.500 288M414 348.400L447.500 336.500M447.500 328.800L467.700 321.300" stroke="#1c1c1c"/>
<path d="M527.0 154.0C523.3 157.0 511.5 165.2 505.0 172.0C498.5 178.8 493.2 186.2 488.0 195.0C482.8 203.8 477.7 215.8 474.0 225.0C470.3 234.2 467.8 242.2 466.0 250.0C464.2 257.8 463.5 268.3 463.0 272.0" stroke="#1a1206" stroke-width=".5"/>
<path d="M508.7 159.7C505.0 162.4 492.8 170.1 486.4 176.0C480.0 181.9 475.3 186.8 470.3 195.0C465.3 203.2 460.0 216.2 456.3 225.4C452.6 234.6 450.5 240.9 448.2 250.0C445.9 259.1 443.6 271.7 442.5 280.0C441.4 288.3 441.2 293.7 441.5 300.0C441.8 306.3 443.0 313.2 444.0 318.0C445.0 322.8 446.4 324.7 447.5 328.8C448.6 332.9 448.0 336.7 450.6 342.6C453.2 348.5 458.1 357.3 463.4 364.0C468.7 370.7 479.4 379.8 482.6 383.0C485.5 384.3 493.8 388.1 500.0 391.0C506.2 393.9 513.3 397.8 520.0 400.5C526.7 403.2 533.3 405.2 540.0 407.0C546.7 408.8 553.3 409.8 560.0 411.0C566.7 412.2 573.3 413.2 580.0 414.0C586.7 414.8 592.2 415.3 600.0 415.6C607.8 415.9 618.7 416.2 627.0 415.8C635.3 415.4 643.1 413.9 650.0 413.4C656.9 412.9 665.3 412.8 668.4 412.7" stroke="#151005" stroke-width=".5"/>
</g>
<path d="M463.300 272L496.400 259L700.600 273L707.600 288.800Z" fill="#2b1d0e"/>
<path d="M463.300 272L496.400 259" stroke="#3a3a3a" stroke-width="1.500"/>
<path d="M627 283L661 270.500" stroke="#40301a" stroke-width=".5"/>
</g>
<path d="M450.3 397.1C448.1 395.1 441.0 389.5 436.9 385.1C432.8 380.8 429.2 375.9 425.9 370.8C422.7 365.7 419.8 360.3 417.4 354.7C415.0 349.2 413.0 343.3 411.4 337.5C409.9 331.6 408.7 325.5 407.9 319.5C407.1 313.5 406.8 307.3 406.8 301.3C406.8 295.2 407.2 289.1 407.9 283.0C408.6 277.0 409.8 271.0 411.2 265.1C412.7 259.2 414.5 253.3 416.6 247.7C418.8 242.0 421.2 236.4 424.0 231.0C426.8 225.7 429.9 220.4 433.4 215.4C436.8 210.4 440.5 205.6 444.5 201.0C448.4 196.5 452.7 192.2 457.2 188.1C461.7 184.1 466.5 180.3 471.5 176.9C476.4 173.5 481.6 170.3 487.0 167.6C492.3 164.8 497.8 162.3 503.5 160.3C509.1 158.2 514.9 156.5 520.7 155.2C526.5 153.8 532.5 152.9 538.4 152.3C544.3 151.7 550.3 151.5 556.2 151.7C562.1 151.9 568.1 152.5 573.9 153.4C579.7 154.3 585.5 155.6 591.1 157.2C596.7 158.8 602.2 160.7 607.6 163.0C612.9 165.2 618.1 167.8 623.1 170.6C628.2 173.4 633.0 176.5 637.7 179.9C642.3 183.2 646.8 186.8 651.0 190.6C655.3 194.4 659.3 198.4 663.2 202.5C667.0 206.7 670.7 211.1 674.1 215.6C677.5 220.1 680.8 224.8 683.8 229.7C686.8 234.5 689.6 239.5 692.2 244.6C694.8 249.8 697.2 255.1 699.4 260.5C701.5 265.9 703.5 271.5 705.1 277.2C706.8 282.8 708.2 288.7 709.3 294.6C710.4 300.6 711.3 306.7 711.7 312.8C712.2 319.0 712.3 325.2 712.0 331.5C711.7 337.8 711.0 344.1 709.7 350.4C708.5 356.6 706.8 362.9 704.5 368.8C702.2 374.8 699.5 380.8 696.0 386.2C692.6 391.6 688.6 396.8 684.0 401.2C679.4 405.6 670.9 410.7 668.3 412.6C665.5 413.6 657.2 416.8 651.6 418.6C646.0 420.4 640.4 422.0 634.8 423.4C629.2 424.7 623.6 426.0 618.0 427.0C612.5 428.0 606.9 428.9 601.3 429.5C595.7 430.1 590.1 430.6 584.5 430.8C578.9 431.1 573.3 431.2 567.7 431.0C562.1 430.9 556.5 430.5 550.9 430.0C545.3 429.4 539.7 428.7 534.1 427.7C528.5 426.8 522.9 425.6 517.3 424.2C511.7 422.8 506.1 421.2 500.6 419.4C495.0 417.6 489.4 415.5 483.8 413.3C478.2 411.0 472.6 408.6 467.0 405.9C461.4 403.2 453.1 398.5 450.3 397.1Z" fill="none" stroke="#3a3a3a" stroke-width=".7"/>
<path d="M394.400 300H407M394.400 315.700H407M400.500 348.400L414 348.400M444.200 406.300L450.200 397.200M673.500 423.300L668.400 412.700M711.500 322L724.800 322.500M711 337.800L723.800 338.500M704.600 369L717.600 369.500" stroke="#333" stroke-width=".6" fill="none"/>
<path d="M574.0 166.6l11.500-5" stroke="#d6460c" stroke-width=".6" opacity=".55"/>
<circle cx="574.0" cy="166.6" r="1.900" fill="#860c0c"/>
<path d="M555.9 192.6l11.500-5" stroke="#d6460c" stroke-width=".6" opacity=".55"/>
<circle cx="555.9" cy="192.6" r="1.900" fill="#860c0c"/>
<path d="M592.6 188.8l11.500-5" stroke="#d6460c" stroke-width=".6" opacity=".55"/>
<circle cx="592.6" cy="188.8" r="1.900" fill="#860c0c"/>
<path d="M537.8 218.2l11.500-5" stroke="#d6460c" stroke-width=".6" opacity=".55"/>
<circle cx="537.8" cy="218.2" r="1.900" fill="#860c0c"/>
<path d="M578.9 219.2l11.500-5" stroke="#d6460c" stroke-width=".6" opacity=".55"/>
<circle cx="578.9" cy="219.2" r="1.900" fill="#860c0c"/>
<path d="M611.7 211.1l11.500-5" stroke="#d6460c" stroke-width=".6" opacity=".55"/>
<circle cx="611.7" cy="211.1" r="1.900" fill="#860c0c"/>
<path d="M560.8 243.8l11.500-5" stroke="#d6460c" stroke-width=".6" opacity=".55"/>
<circle cx="560.8" cy="243.8" r="1.900" fill="#860c0c"/>
<path d="M602.0 245.6l11.500-5" stroke="#d6460c" stroke-width=".6" opacity=".55"/>
<circle cx="602.0" cy="245.6" r="1.900" fill="#860c0c"/>
<path d="M626.9 181.8l11.500-5" stroke="#d6460c" stroke-width=".6" opacity=".55"/>
<circle cx="626.9" cy="181.8" r="1.900" fill="#860c0c"/>
<path d="M630.7 233.0l11.500-5" stroke="#d6460c" stroke-width=".6" opacity=".55"/>
<circle cx="630.7" cy="233.0" r="1.900" fill="#860c0c"/>
<path d="M669.0 235.4l11.500-5" stroke="#d6460c" stroke-width=".6" opacity=".55"/>
<circle cx="669.0" cy="235.4" r="1.900" fill="#860c0c"/>
<path d="M479.2 238.0V272.0" stroke="#c41212" stroke-width=".6"/>
<path d="M479.2 236.0L481.1 241.2L477.3 241.2Z" fill="#a80e0e"/>
<path d="M491.5 236.0V268.0" stroke="#c41212" stroke-width=".6"/>
<path d="M491.5 234.0L493.4 239.2L489.6 239.2Z" fill="#a80e0e"/>
<path d="M512.2 237.2V262.0" stroke="#c41212" stroke-width=".6"/>
<path d="M512.2 235.2L514.1 240.4L510.3 240.4Z" fill="#a80e0e"/>
<path d="M521.8 241.5V268.0" stroke="#c41212" stroke-width=".6"/>
<path d="M521.8 239.5L523.7 244.7L519.9 244.7Z" fill="#a80e0e"/>
<path d="M547.8 238.3V264.0" stroke="#c41212" stroke-width=".6"/>
<path d="M547.8 236.3L549.7 241.5L545.9 241.5Z" fill="#a80e0e"/>
<path d="M554.8 244.7V277.0" stroke="#c41212" stroke-width=".6"/>
<path d="M554.8 242.7L556.7 247.9L552.9 247.9Z" fill="#a80e0e"/>
<path d="M580.8 240.0V270.0" stroke="#c41212" stroke-width=".6"/>
<path d="M580.8 238.0L582.7 243.2L578.9 243.2Z" fill="#a80e0e"/>
<path d="M587.5 245.5V278.0" stroke="#c41212" stroke-width=".6"/>
<path d="M587.5 243.5L589.4 248.7L585.6 248.7Z" fill="#a80e0e"/>
<path d="M613.3 242.5V271.0" stroke="#c41212" stroke-width=".6"/>
<path d="M613.3 240.5L615.2 245.7L611.4 245.7Z" fill="#a80e0e"/>
<path d="M623.0 248.5V279.0" stroke="#c41212" stroke-width=".6"/>
<path d="M623.0 246.5L624.9 251.7L621.1 251.7Z" fill="#a80e0e"/>
<path d="M664.6 246.5V278.0" stroke="#c41212" stroke-width=".6"/>
<path d="M664.6 244.5L666.5 249.7L662.7 249.7Z" fill="#a80e0e"/>
<path d="M674.0 252.5V281.0" stroke="#c41212" stroke-width=".6"/>
<path d="M674.0 250.5L675.9 255.7L672.1 255.7Z" fill="#a80e0e"/>
<path d="M700.6 268.0V277.0" stroke="#c41212" stroke-width=".6"/>
<path d="M511.0 160.7L535.6 184.0" stroke="#d41818" stroke-width=".5"/>
<path d="M535.6 184.0L530.7 181.9L533.3 179.2Z" fill="#b40f0f"/>
<path d="M538.8 154.0L549.5 168.0" stroke="#d41818" stroke-width=".5"/>
<path d="M549.5 168.0L545.0 165.2L548.0 162.9Z" fill="#b40f0f"/>
<path d="M534.6 160.6L547.3 177.7" stroke="#d41818" stroke-width=".5"/>
<path d="M547.3 177.7L542.8 174.8L545.8 172.6Z" fill="#b40f0f"/>
<path d="M509.0 175.6L534.6 195.2" stroke="#d41818" stroke-width=".5"/>
<path d="M534.6 195.2L529.5 193.7L531.8 190.7Z" fill="#b40f0f"/>
<path d="M497.3 184.0L522.8 201.0" stroke="#d41818" stroke-width=".5"/>
<path d="M522.8 201.0L517.6 199.8L519.7 196.6Z" fill="#b40f0f"/>
<path d="M496.2 200.0L525.0 214.0" stroke="#d41818" stroke-width=".5"/>
<path d="M525.0 214.0L519.7 213.5L521.3 210.1Z" fill="#b40f0f"/>
<path d="M484.5 207.5L512.2 220.3" stroke="#d41818" stroke-width=".5"/>
<path d="M512.2 220.3L506.9 219.9L508.5 216.5Z" fill="#b40f0f"/>
<path d="M493.0 227.8L518.6 235.6" stroke="#d41818" stroke-width=".5"/>
<path d="M518.6 235.6L513.3 236.0L514.4 232.3Z" fill="#b40f0f"/>
<path d="M485.6 235.2L508.0 242.0" stroke="#d41818" stroke-width=".5"/>
<path d="M508.0 242.0L502.7 242.4L503.8 238.7Z" fill="#b40f0f"/>
<path d="M485.6 248.4L516.5 254.0" stroke="#d41818" stroke-width=".5"/>
<path d="M516.5 254.0L511.2 255.0L511.9 251.2Z" fill="#b40f0f"/>
<path d="M472.8 260.8L503.7 265.0" stroke="#d41818" stroke-width=".5"/>
<path d="M503.7 265.0L498.5 266.2L499.0 262.4Z" fill="#b40f0f"/>
<path d="M554.8 153.0L562.3 162.8" stroke="#d41818" stroke-width=".5"/>
<path d="M562.3 162.8L557.8 160.0L560.8 157.7Z" fill="#b40f0f"/>
<path d="M562.3 152.0L566.5 157.5" stroke="#d41818" stroke-width=".5"/>
<path d="M566.5 157.5L562.0 154.7L565.0 152.4Z" fill="#b40f0f"/>
<path d="M494.0 230.5L496.9 227.4L498.3 230.3Z" fill="#c01010"/>
<path d="M494.0 230.5l9-4.500" stroke="#e06060" stroke-width=".6"/>
<path d="M504.7 198.6L507.6 195.5L509.0 198.4Z" fill="#c01010"/>
<path d="M504.7 198.6l9-4.500" stroke="#e06060" stroke-width=".6"/>
<path d="M520.7 171.3L523.6 168.2L525.0 171.1Z" fill="#c01010"/>
<path d="M520.7 171.3l9-4.500" stroke="#e06060" stroke-width=".6"/>
<path d="M486.0 250.0L488.9 246.9L490.3 249.8Z" fill="#c01010"/>
<path d="M486.0 250.0l9-4.500" stroke="#e06060" stroke-width=".6"/>
<ellipse cx="502" cy="265.300" rx="3" ry="1.200" fill="#e01010"/>
<path d="M472 262L496 259.500M468 266L500 266" stroke="#d01818" stroke-width=".6"/>
<rect x="616.0" y="107.2" width="11" height="4.600" fill="#3f5070" opacity=".9"/><text x="621.5" y="111.1" font-size="4.400" text-anchor="middle" fill="#c8d0de" font-weight="bold">1.00</text>
<rect x="679.0" y="111.7" width="11" height="4.600" fill="#3f5070" opacity=".9"/><text x="684.5" y="115.6" font-size="4.400" text-anchor="middle" fill="#c8d0de" font-weight="bold">1.00</text>
<rect x="640.0" y="132.7" width="11" height="4.600" fill="#3f5070" opacity=".9"/><text x="645.5" y="136.6" font-size="4.400" text-anchor="middle" fill="#c8d0de" font-weight="bold">1.00</text>
<rect x="623.3" y="238.7" width="11" height="4.600" fill="#3f5070" opacity=".9"/><text x="628.8" y="242.6" font-size="4.400" text-anchor="middle" fill="#c8d0de" font-weight="bold">1.00</text>
<rect x="664.5" y="237.4" width="11" height="4.600" fill="#3f5070" opacity=".9"/><text x="670.0" y="241.3" font-size="4.400" text-anchor="middle" fill="#c8d0de" font-weight="bold">1.00</text>
<rect x="808.3" y="247.1" width="11" height="4.600" fill="#3f5070" opacity=".9"/><text x="813.8" y="251.0" font-size="4.400" text-anchor="middle" fill="#c8d0de" font-weight="bold">1.00</text>
<rect x="775.5" y="259.6" width="11" height="4.600" fill="#3f5070" opacity=".9"/><text x="781.0" y="263.5" font-size="4.400" text-anchor="middle" fill="#c8d0de" font-weight="bold">1.00</text>
<rect x="781.5" y="269.7" width="11" height="4.600" fill="#3f5070" opacity=".9"/><text x="787.0" y="273.6" font-size="4.400" text-anchor="middle" fill="#c8d0de" font-weight="bold">1.00</text>
<rect x="479.3" y="230.2" width="11" height="4.600" fill="#3f5070" opacity=".9"/><text x="484.8" y="234.1" font-size="4.400" text-anchor="middle" fill="#c8d0de" font-weight="bold">1.00</text>
<rect x="519.9" y="242.3" width="11" height="4.600" fill="#3f5070" opacity=".9"/><text x="525.4" y="246.2" font-size="4.400" text-anchor="middle" fill="#c8d0de" font-weight="bold">1.00</text>
<text x="316" y="525" font-size="5.300" fill="#2a1a04" textLength="156" lengthAdjust="spacingAndGlyphs">Forces de déconfinement (λ=1.00) / WTB - Variation de la nappe</text>
<path d="M772 503L761 507" stroke="#808080" stroke-width="1.600"/><circle cx="760.600" cy="507" r="2.500" fill="#5a5a6a" stroke="#3a3a4a" stroke-width=".5"/>
<path d="M775.500 499V464" stroke="#0a10e8" stroke-width="1.500"/><path d="M775.500 455.500l-3 10.200h6z" fill="#0a10e8"/>
<path d="M778 501.600L811 503.700" stroke="#f01010" stroke-width="1.500"/><path d="M818.500 504.200l-9-3.200-.4 6.200z" fill="#f01010"/>
<rect x="772" y="498" width="7" height="6.600" fill="#7a7a7a" stroke="#555" stroke-width=".4"/>
<text x="776" y="453.500" font-size="4.500" fill="#8a3ac0" font-weight="bold">Z</text><text x="820" y="503" font-size="4.500" fill="#f05a10" font-weight="bold">Y</text>
</svg>
<i class="abs" style="left:539.500px;top:16.9px;width:6px;height:5.600px;background:#808080"></i>
<i class="abs" style="left:539.500px;top:26.7px;width:6px;height:5.600px;background:#ff8c00"></i>
<i class="abs" style="left:539.500px;top:36.5px;width:6px;height:5.600px;background:#4f94dc"></i>
<i class="abs" style="left:539.500px;top:46.2px;width:6px;height:5.600px;background:#00e400"></i>
<i class="abs" style="left:539.500px;top:56.0px;width:6px;height:5.600px;background:#ffff00"></i>
<i class="abs" style="left:539.500px;top:65.7px;width:6px;height:5.600px;background:#f0f0a0"></i>
<i class="abs" style="left:539.500px;top:75.5px;width:6px;height:5.600px;background:#c8c8c8"></i>
<i class="abs" style="left:539.500px;top:85.7px;width:6px;height:5.600px;background:#000"></i>
<i class="abs" style="left:539.500px;top:95.5px;width:6px;height:5.600px;background:#fff"></i>
<i class="abs" style="left:539.500px;top:105.7px;width:6px;height:5.600px;background:#ff0000"></i>
<i class="abs" style="left:539.500px;top:115.4px;width:6px;height:5.600px;background:#ff3000"></i>
<i class="abs" style="left:539.500px;top:125.2px;width:6px;height:5.600px;background:#ff7000"></i>
<i class="abs" style="left:539.500px;top:134.9px;width:6px;height:5.600px;background:#ffc800"></i>
<i class="abs" style="left:539.500px;top:145.2px;width:6px;height:5.600px;background:#00c400"></i>
<i class="abs" style="left:539.500px;top:154.9px;width:6px;height:5.600px;background:#20c810"></i>
<i class="abs" style="left:539.500px;top:164.7px;width:6px;height:5.600px;background:#58c810"></i>
<i class="abs" style="left:539.500px;top:174.4px;width:6px;height:5.600px;background:#98c800"></i>
<i class="abs" style="left:539.500px;top:184.6px;width:6px;height:5.600px;background:#0000ff"></i>
<i class="abs" style="left:539.500px;top:194.4px;width:6px;height:5.600px;background:#0838ff"></i>
<i class="abs" style="left:539.500px;top:204.2px;width:6px;height:5.600px;background:#0880ff"></i>
<i class="abs" style="left:539.500px;top:213.9px;width:6px;height:5.600px;background:#08d8ff"></i>
<i class="abs" style="left:539.500px;top:224.2px;width:6px;height:5.600px;background:#c80808"></i>
<i class="abs" style="left:539.500px;top:233.9px;width:6px;height:5.600px;background:#e03010"></i>
<i class="abs" style="left:539.500px;top:244.2px;width:6px;height:5.600px;background:#d06010"></i>
<i class="abs" style="left:539.500px;top:254.2px;width:6px;height:5.600px;background:#d0a010"></i>
<i class="abs" style="left:539.500px;top:263.9px;width:6px;height:5.600px;background:#089818"></i>
<i class="abs" style="left:539.500px;top:273.7px;width:6px;height:5.600px;background:#10a018"></i>
<i class="abs" style="left:539.500px;top:283.6px;width:6px;height:5.600px;background:#40a018"></i>
<i class="abs" style="left:539.500px;top:293.2px;width:6px;height:5.600px;background:#78a010"></i>
<i class="abs" style="left:539.500px;top:303.7px;width:6px;height:5.600px;background:#0030d0"></i>
<i class="abs" style="left:539.500px;top:313.2px;width:6px;height:5.600px;background:#1068d0"></i>
<i class="abs" style="left:539.500px;top:323.2px;width:6px;height:5.600px;background:#10a0d8"></i>
<i class="abs" style="left:539.500px;top:333.2px;width:6px;height:5.600px;background:#18c8d0"></i>
<i class="abs" style="left:539.500px;top:343.2px;width:6px;height:5.600px;background:#502020"></i>
<i class="abs" style="left:539.500px;top:353.2px;width:6px;height:5.600px;background:#303030"></i>
</div>
<div id="right" class="abs" style="left:841px;top:66px;width:157px;height:482.500px;overflow:hidden;background:#4d4d4d">
<div class="ptitle" style="left:0;top:0;width:157px;height:13px;line-height:13px;padding-left:4px"><span>Modèles</span></div>
<svg class="abs" style="left:138.500px;top:2.500px" width="18" height="9" viewBox="0 0 18 9"><path d="M2.200 1h2.600v3h.9v.9h-1.800v3h-.8v-3h-1.800v-.9h.9z" fill="#eee"/><path d="M10.500 1.500l4.500 4.500M15 1.500l-4.500 4.500" stroke="#fff" stroke-width="1.200"/></svg>
<div class="abs" style="left:2px;top:13px;width:155px;height:16px;background:linear-gradient(#d6dae0,#a9b0bb)"></div>
<svg class="abs" style="left:2px;top:13px" width="70" height="16" viewBox="0 0 70 16">
<rect x="1.500" y=".5" width="15" height="15" fill="#fbb040"/>
<g fill="#fdf0d0" stroke="#6b4a10" stroke-width=".7"><rect x="5.500" y="2.500" width="5" height="3"/><rect x="8.500" y="7" width="5" height="3"/><rect x="8.500" y="11" width="5" height="3"/></g><path d="M6.500 5.500v7h2M6.500 8.500h2" stroke="#6b4a10" stroke-width=".7" fill="none"/>
<rect x="20.500" y="2.500" width="10" height="11" fill="#cfd3da" stroke="#8a8f98" stroke-width=".7"/><path d="M23 5v6M28 5v6M22 8h7" stroke="#f4f4f4" stroke-width="1"/>
<rect x="35.500" y="2.500" width="11" height="11" fill="#f0f0f0" stroke="#c8c8c8" stroke-width=".6"/><rect x="35.500" y="2.500" width="11" height="3" fill="#f0a050"/><path d="M36 8.500h10M36 11h10" stroke="#d8d8d8" stroke-width=".6"/>
<path d="M52.500 7.500a4 4 0 0 1 7-2.500" stroke="#444" stroke-width="1.500" fill="none"/><path d="M60.500 8.500a4 4 0 0 1-7 2.500" stroke="#444" stroke-width="1.500" fill="none"/><path d="M58 3l3 .5-.5 3zM55 13l-3-.5.5-3z" fill="#444"/>
</svg>
<div class="abs" style="left:2px;top:29px;width:155px;height:453px;background:#fff"></div>
<svg class="abs" style="left:3.8px;top:33.1px" width="6" height="5" viewBox="0 0 6 5"><path d="M.8 1.200l2.200 2.300 2.200-2.300" stroke="#2a2a2a" stroke-width="1.150" fill="none"/></svg>
<span class="abs" style="left:13.8px;top:30.9px;line-height:0"><svg class="ti" width="7" height="7" viewBox="0 0 7 7"><rect x=".5" y=".5" width="6" height="6" fill="#eee" stroke="#777" stroke-width=".6"/><path d="M1 2.500h5M1 4.500h5" stroke="#777" stroke-width=".6"/></svg></span>
<span class="tt" style="left:24.8px;top:30.6px;font-weight:bold;">Modèles</span>
<svg class="abs" style="left:13.4px;top:42.5px" width="6" height="5" viewBox="0 0 6 5"><path d="M.8 1.200l2.200 2.300 2.200-2.300" stroke="#2a2a2a" stroke-width="1.150" fill="none"/></svg>
<span class="abs" style="left:23.4px;top:40.3px;line-height:0"><svg class="ti" width="9" height="9" viewBox="0 0 8 8"><path d="M1 3l1.500-1.500h4L7.500 3v3.500H1z" fill="#4a90e0" stroke="#0c1420" stroke-width="1"/><path d="M1 3h5v3.500M6 3l1.500-1.500" stroke="#0c1420" stroke-width=".7" fill="none"/></svg></span>
<span class="tt" style="left:34.4px;top:40.0px;">STATIQUE</span>
<svg class="abs" style="left:23.2px;top:51.9px" width="6" height="5" viewBox="0 0 6 5"><path d="M.8 1.200l2.200 2.300 2.200-2.300" stroke="#2a2a2a" stroke-width="1.150" fill="none"/></svg>
<span class="abs" style="left:33.2px;top:49.7px;line-height:0"><svg class="ti" width="9" height="9" viewBox="0 0 8 8"><path d="M1 3l1.500-1.500h4L7.500 3v3.500H1z" fill="#4a90e0" stroke="#0c1420" stroke-width="1"/><path d="M1 3h5v3.500M6 3l1.500-1.500" stroke="#0c1420" stroke-width=".7" fill="none"/></svg></span>
<span class="tt" style="left:44.2px;top:49.4px;">PHASAGE</span>
<svg class="abs" style="left:33.3px;top:61.2px" width="6" height="5" viewBox="0 0 6 5"><path d="M.8 1.200l2.200 2.300 2.200-2.300" stroke="#2a2a2a" stroke-width="1.150" fill="none"/></svg>
<span class="abs" style="left:43.3px;top:59.0px;line-height:0"><svg class="ti" width="9" height="9" viewBox="0 0 8 8"><path d="M1 3l1.500-1.500h4L7.500 3v3.500H1z" fill="#6ab878" stroke="#10200c" stroke-width="1"/><path d="M1 3h5v3.500M6 3l1.500-1.500" stroke="#10200c" stroke-width=".6" fill="none"/></svg></span>
<span class="tt" style="left:54.3px;top:58.7px;">[1]Initial State</span>
<span class="abs" style="left:54.4px;top:68.4px;line-height:0"><svg class="ti" width="7.5" height="8.600" viewBox="0 0 7 8"><path d="M1 .6h3.200L6 2.400v5H1z" fill="#fff" stroke="#222" stroke-width=".8"/></svg></span>
<span class="tt" style="left:64.2px;top:68.1px;">[1]Properties</span>
<span class="abs" style="left:54.4px;top:77.8px;line-height:0"><svg class="ti" width="7.5" height="8.600" viewBox="0 0 7 8"><path d="M1 .6h3.200L6 2.400v5H1z" fill="#fff" stroke="#222" stroke-width=".8"/></svg></span>
<span class="tt" style="left:64.2px;top:77.5px;">[1]Init.Parameters</span>
<svg class="abs" style="left:43.2px;top:89.4px" width="6" height="5" viewBox="0 0 6 5"><path d="M.8 1.200l2.200 2.300 2.200-2.300" stroke="#2a2a2a" stroke-width="1.150" fill="none"/></svg>
<span class="abs" style="left:54.4px;top:87.2px;line-height:0"><svg class="ti" width="7.5" height="8.600" viewBox="0 0 7 8"><path d="M1 .6h3.200L6 2.400v5H1z" fill="#ddd" stroke="#222" stroke-width=".8"/><path d="M2 3.500h3M2 5.200h3" stroke="#444" stroke-width=".5"/></svg></span>
<span class="tt" style="left:64.2px;top:86.9px;">Conditions aux limites</span>
<span class="abs" style="left:64.0px;top:96.6px;line-height:0"><svg class="ti" width="7.5" height="8.600" viewBox="0 0 7 8"><path d="M1 .6h3.200L6 2.400v5H1z" fill="#e03030" stroke="#801010" stroke-width=".8"/><rect x="2.300" y="3.500" width="2.400" height="2.400" fill="#501010"/></svg></span>
<span class="tt" style="left:73.8px;top:96.3px;">[1]Main Bound Cond (shar</span>
<svg class="abs" style="left:43.2px;top:108.1px" width="6" height="5" viewBox="0 0 6 5"><path d="M.8 1.200l2.200 2.300 2.200-2.300" stroke="#2a2a2a" stroke-width="1.150" fill="none"/></svg>
<span class="abs" style="left:54.4px;top:105.9px;line-height:0"><svg class="ti" width="7.5" height="8.600" viewBox="0 0 7 8"><path d="M1 .6h3.200L6 2.400v5H1z" fill="#ddd" stroke="#222" stroke-width=".8"/><path d="M2 3.500h3M2 5.200h3" stroke="#444" stroke-width=".5"/></svg></span>
<span class="tt" style="left:64.2px;top:105.6px;">Cas de charges</span>
<span class="abs" style="left:64.0px;top:115.3px;line-height:0"><svg class="ti" width="7.5" height="8.600" viewBox="0 0 7 8"><path d="M1 .6h3.200L6 2.400v5H1z" fill="#fff" stroke="#222" stroke-width=".8"/></svg></span>
<span class="tt" style="left:73.8px;top:115.0px;">[2]Empty Loading (M1)</span>
<span class="abs" style="left:54.4px;top:124.7px;line-height:0"><svg class="ti" width="7.5" height="8.600" viewBox="0 0 7 8"><path d="M1 .6h3.200L6 2.400v5H1z" fill="#fff" stroke="#222" stroke-width=".8"/></svg></span>
<span class="tt" style="left:64.2px;top:124.4px;">[1]Paramètres de calcul</span>
<svg class="abs" style="left:33.3px;top:136.3px" width="6" height="5" viewBox="0 0 6 5"><path d="M.8 1.200l2.200 2.300 2.200-2.300" stroke="#2a2a2a" stroke-width="1.150" fill="none"/></svg>
<span class="abs" style="left:43.3px;top:134.1px;line-height:0"><svg class="ti" width="9" height="9" viewBox="0 0 8 8"><path d="M1 3l1.500-1.500h4L7.500 3v3.500H1z" fill="#6ab878" stroke="#10200c" stroke-width="1"/><path d="M1 3h5v3.500M6 3l1.500-1.500" stroke="#10200c" stroke-width=".6" fill="none"/></svg></span>
<span class="tt" style="left:54.3px;top:133.8px;">[2]Excav 1 (Sup)</span>
<span class="abs" style="left:54.4px;top:143.5px;line-height:0"><svg class="ti" width="7.5" height="8.600" viewBox="0 0 7 8"><path d="M1 .6h3.200L6 2.400v5H1z" fill="#fff" stroke="#222" stroke-width=".8"/></svg></span>
<span class="tt" style="left:64.2px;top:143.2px;">[2]Properties</span>
<span class="abs" style="left:54.4px;top:152.8px;line-height:0"><svg class="ti" width="7.5" height="8.600" viewBox="0 0 7 8"><path d="M1 .6h3.200L6 2.400v5H1z" fill="#fff" stroke="#222" stroke-width=".8"/></svg></span>
<span class="tt" style="left:64.2px;top:152.5px;">[2]Init.Parameters</span>
<svg class="abs" style="left:43.2px;top:164.4px" width="6" height="5" viewBox="0 0 6 5"><path d="M.8 1.200l2.200 2.300 2.200-2.300" stroke="#2a2a2a" stroke-width="1.150" fill="none"/></svg>
<span class="abs" style="left:54.4px;top:162.2px;line-height:0"><svg class="ti" width="7.5" height="8.600" viewBox="0 0 7 8"><path d="M1 .6h3.200L6 2.400v5H1z" fill="#ddd" stroke="#222" stroke-width=".8"/><path d="M2 3.500h3M2 5.200h3" stroke="#444" stroke-width=".5"/></svg></span>
<span class="tt" style="left:64.2px;top:161.9px;">Conditions aux limites</span>
<span class="abs" style="left:64.0px;top:171.6px;line-height:0"><svg class="ti" width="7.5" height="8.600" viewBox="0 0 7 8"><path d="M1 .6h3.200L6 2.400v5H1z" fill="#e03030" stroke="#801010" stroke-width=".8"/><rect x="2.300" y="3.500" width="2.400" height="2.400" fill="#501010"/></svg></span>
<span class="tt" style="left:73.8px;top:171.3px;">[1]Main Bound Cond (shar</span>
<svg class="abs" style="left:43.2px;top:183.2px" width="6" height="5" viewBox="0 0 6 5"><path d="M.8 1.200l2.200 2.300 2.200-2.300" stroke="#2a2a2a" stroke-width="1.150" fill="none"/></svg>
<span class="abs" style="left:54.4px;top:181.0px;line-height:0"><svg class="ti" width="7.5" height="8.600" viewBox="0 0 7 8"><path d="M1 .6h3.200L6 2.400v5H1z" fill="#ddd" stroke="#222" stroke-width=".8"/><path d="M2 3.500h3M2 5.200h3" stroke="#444" stroke-width=".5"/></svg></span>
<span class="tt" style="left:64.2px;top:180.7px;">Cas de charges</span>
<span class="abs" style="left:64.0px;top:190.4px;line-height:0"><svg class="ti" width="7.5" height="8.600" viewBox="0 0 7 8"><path d="M1 .6h3.200L6 2.400v5H1z" fill="#fff" stroke="#222" stroke-width=".8"/></svg></span>
<span class="tt" style="left:73.8px;top:190.1px;">[4]Excav Forces (M2)</span>
<span class="abs" style="left:54.4px;top:199.7px;line-height:0"><svg class="ti" width="7.5" height="8.600" viewBox="0 0 7 8"><path d="M1 .6h3.200L6 2.400v5H1z" fill="#fff" stroke="#222" stroke-width=".8"/></svg></span>
<span class="tt" style="left:64.2px;top:199.4px;">[2]Paramètres de calcul</span>
<svg class="abs" style="left:33.3px;top:211.3px" width="6" height="5" viewBox="0 0 6 5"><path d="M.8 1.200l2.200 2.300 2.200-2.300" stroke="#2a2a2a" stroke-width="1.150" fill="none"/></svg>
<span class="abs" style="left:43.3px;top:209.1px;line-height:0"><svg class="ti" width="9" height="9" viewBox="0 0 8 8"><path d="M1 3l1.500-1.500h4L7.500 3v3.500H1z" fill="#6ab878" stroke="#10200c" stroke-width="1"/><path d="M1 3h5v3.500M6 3l1.500-1.500" stroke="#10200c" stroke-width=".6" fill="none"/></svg></span>
<span class="tt" style="left:54.3px;top:208.8px;">[3]Excav 1 (Inf)</span>
<span class="abs" style="left:54.4px;top:218.5px;line-height:0"><svg class="ti" width="7.5" height="8.600" viewBox="0 0 7 8"><path d="M1 .6h3.200L6 2.400v5H1z" fill="#fff" stroke="#222" stroke-width=".8"/></svg></span>
<span class="tt" style="left:64.2px;top:218.2px;">[3]Properties</span>
<div class="abs" style="left:62.7px;top:227.8px;width:50px;height:9px;background:#dcdcdc;border:.6px solid #8a8a8a"></div>
<span class="abs" style="left:54.4px;top:227.9px;line-height:0"><svg class="ti" width="7.5" height="8.600" viewBox="0 0 7 8"><path d="M1 .6h3.200L6 2.400v5H1z" fill="#fff" stroke="#222" stroke-width=".8"/></svg></span>
<span class="tt" style="left:64.2px;top:227.6px;">[3]Init.Parameters</span>
<svg class="abs" style="left:43.2px;top:239.5px" width="6" height="5" viewBox="0 0 6 5"><path d="M.8 1.200l2.200 2.300 2.200-2.300" stroke="#2a2a2a" stroke-width="1.150" fill="none"/></svg>
<span class="abs" style="left:54.4px;top:237.3px;line-height:0"><svg class="ti" width="7.5" height="8.600" viewBox="0 0 7 8"><path d="M1 .6h3.200L6 2.400v5H1z" fill="#ddd" stroke="#222" stroke-width=".8"/><path d="M2 3.500h3M2 5.200h3" stroke="#444" stroke-width=".5"/></svg></span>
<span class="tt" style="left:64.2px;top:237.0px;">Conditions aux limites</span>
<span class="abs" style="left:64.0px;top:246.6px;line-height:0"><svg class="ti" width="7.5" height="8.600" viewBox="0 0 7 8"><path d="M1 .6h3.200L6 2.400v5H1z" fill="#e03030" stroke="#801010" stroke-width=".8"/><rect x="2.300" y="3.500" width="2.400" height="2.400" fill="#501010"/></svg></span>
<span class="tt" style="left:73.8px;top:246.3px;">[1]Main Bound Cond (shar</span>
<svg class="abs" style="left:43.2px;top:258.2px" width="6" height="5" viewBox="0 0 6 5"><path d="M.8 1.200l2.200 2.300 2.200-2.300" stroke="#2a2a2a" stroke-width="1.150" fill="none"/></svg>
<span class="abs" style="left:54.4px;top:256.0px;line-height:0"><svg class="ti" width="7.5" height="8.600" viewBox="0 0 7 8"><path d="M1 .6h3.200L6 2.400v5H1z" fill="#ddd" stroke="#222" stroke-width=".8"/><path d="M2 3.500h3M2 5.200h3" stroke="#444" stroke-width=".5"/></svg></span>
<span class="tt" style="left:64.2px;top:255.7px;">Cas de charges</span>
<span class="abs" style="left:64.0px;top:265.4px;line-height:0"><svg class="ti" width="7.5" height="8.600" viewBox="0 0 7 8"><path d="M1 .6h3.200L6 2.400v5H1z" fill="#fff" stroke="#222" stroke-width=".8"/></svg></span>
<span class="tt" style="left:73.8px;top:265.1px;">[6]Excav Forces (M3)</span>
<span class="abs" style="left:54.4px;top:274.8px;line-height:0"><svg class="ti" width="7.5" height="8.600" viewBox="0 0 7 8"><path d="M1 .6h3.200L6 2.400v5H1z" fill="#fff" stroke="#222" stroke-width=".8"/></svg></span>
<span class="tt" style="left:64.2px;top:274.5px;">[3]Paramètres de calcul</span>
<svg class="abs" style="left:33.3px;top:286.4px" width="6" height="5" viewBox="0 0 6 5"><path d="M.8 1.200l2.200 2.300 2.200-2.300" stroke="#2a2a2a" stroke-width="1.150" fill="none"/></svg>
<span class="abs" style="left:43.3px;top:284.2px;line-height:0"><svg class="ti" width="9" height="9" viewBox="0 0 8 8"><path d="M1 3l1.500-1.500h4L7.500 3v3.500H1z" fill="#6ab878" stroke="#10200c" stroke-width="1"/><path d="M1 3h5v3.500M6 3l1.500-1.500" stroke="#10200c" stroke-width=".6" fill="none"/></svg></span>
<span class="tt" style="left:54.3px;top:283.9px;">[4]Excav 2 (Sup)</span>
<span class="abs" style="left:54.4px;top:293.5px;line-height:0"><svg class="ti" width="7.5" height="8.600" viewBox="0 0 7 8"><path d="M1 .6h3.200L6 2.400v5H1z" fill="#fff" stroke="#222" stroke-width=".8"/></svg></span>
<span class="tt" style="left:64.2px;top:293.2px;">[4]Properties</span>
<span class="abs" style="left:54.4px;top:302.9px;line-height:0"><svg class="ti" width="7.5" height="8.600" viewBox="0 0 7 8"><path d="M1 .6h3.200L6 2.400v5H1z" fill="#fff" stroke="#222" stroke-width=".8"/></svg></span>
<span class="tt" style="left:64.2px;top:302.6px;">[4]Init.Parameters</span>
<svg class="abs" style="left:43.2px;top:314.5px" width="6" height="5" viewBox="0 0 6 5"><path d="M.8 1.200l2.200 2.300 2.200-2.300" stroke="#2a2a2a" stroke-width="1.150" fill="none"/></svg>
<span class="abs" style="left:54.4px;top:312.3px;line-height:0"><svg class="ti" width="7.5" height="8.600" viewBox="0 0 7 8"><path d="M1 .6h3.200L6 2.400v5H1z" fill="#ddd" stroke="#222" stroke-width=".8"/><path d="M2 3.500h3M2 5.200h3" stroke="#444" stroke-width=".5"/></svg></span>
<span class="tt" style="left:64.2px;top:312.0px;">Conditions aux limites</span>
<span class="abs" style="left:64.0px;top:321.7px;line-height:0"><svg class="ti" width="7.5" height="8.600" viewBox="0 0 7 8"><path d="M1 .6h3.200L6 2.400v5H1z" fill="#e03030" stroke="#801010" stroke-width=".8"/><rect x="2.300" y="3.500" width="2.400" height="2.400" fill="#501010"/></svg></span>
<span class="tt" style="left:73.8px;top:321.4px;">[1]Main Bound Cond (shar</span>
<svg class="abs" style="left:43.2px;top:333.3px" width="6" height="5" viewBox="0 0 6 5"><path d="M.8 1.200l2.200 2.300 2.200-2.300" stroke="#2a2a2a" stroke-width="1.150" fill="none"/></svg>
<span class="abs" style="left:54.4px;top:331.1px;line-height:0"><svg class="ti" width="7.5" height="8.600" viewBox="0 0 7 8"><path d="M1 .6h3.200L6 2.400v5H1z" fill="#ddd" stroke="#222" stroke-width=".8"/><path d="M2 3.500h3M2 5.200h3" stroke="#444" stroke-width=".5"/></svg></span>
<span class="tt" style="left:64.2px;top:330.8px;">Cas de charges</span>
<span class="abs" style="left:64.0px;top:340.4px;line-height:0"><svg class="ti" width="7.5" height="8.600" viewBox="0 0 7 8"><path d="M1 .6h3.200L6 2.400v5H1z" fill="#fff" stroke="#222" stroke-width=".8"/></svg></span>
<span class="tt" style="left:73.8px;top:340.1px;">[8]Excav Forces (M4)</span>
<span class="abs" style="left:54.4px;top:349.8px;line-height:0"><svg class="ti" width="7.5" height="8.600" viewBox="0 0 7 8"><path d="M1 .6h3.200L6 2.400v5H1z" fill="#fff" stroke="#222" stroke-width=".8"/></svg></span>
<span class="tt" style="left:64.2px;top:349.5px;">[4]Paramètres de calcul</span>
<svg class="abs" style="left:33.3px;top:361.4px" width="6" height="5" viewBox="0 0 6 5"><path d="M.8 1.200l2.200 2.300 2.200-2.300" stroke="#2a2a2a" stroke-width="1.150" fill="none"/></svg>
<span class="abs" style="left:43.3px;top:359.2px;line-height:0"><svg class="ti" width="9" height="9" viewBox="0 0 8 8"><path d="M1 3l1.500-1.500h4L7.500 3v3.500H1z" fill="#6ab878" stroke="#10200c" stroke-width="1"/><path d="M1 3h5v3.500M6 3l1.500-1.500" stroke="#10200c" stroke-width=".6" fill="none"/></svg></span>
<span class="tt" style="left:54.3px;top:358.9px;">[5]Excav 2 (Inf)</span>
<span class="abs" style="left:54.4px;top:368.6px;line-height:0"><svg class="ti" width="7.5" height="8.600" viewBox="0 0 7 8"><path d="M1 .6h3.200L6 2.400v5H1z" fill="#fff" stroke="#222" stroke-width=".8"/></svg></span>
<span class="tt" style="left:64.2px;top:368.3px;">[5]Properties</span>
<span class="abs" style="left:54.4px;top:378.0px;line-height:0"><svg class="ti" width="7.5" height="8.600" viewBox="0 0 7 8"><path d="M1 .6h3.200L6 2.400v5H1z" fill="#fff" stroke="#222" stroke-width=".8"/></svg></span>
<span class="tt" style="left:64.2px;top:377.7px;">[5]Init.Parameters</span>
<svg class="abs" style="left:43.2px;top:389.5px" width="6" height="5" viewBox="0 0 6 5"><path d="M.8 1.200l2.200 2.300 2.200-2.300" stroke="#2a2a2a" stroke-width="1.150" fill="none"/></svg>
<span class="abs" style="left:54.4px;top:387.3px;line-height:0"><svg class="ti" width="7.5" height="8.600" viewBox="0 0 7 8"><path d="M1 .6h3.200L6 2.400v5H1z" fill="#ddd" stroke="#222" stroke-width=".8"/><path d="M2 3.500h3M2 5.200h3" stroke="#444" stroke-width=".5"/></svg></span>
<span class="tt" style="left:64.2px;top:387.0px;">Conditions aux limites</span>
<span class="abs" style="left:64.0px;top:396.7px;line-height:0"><svg class="ti" width="7.5" height="8.600" viewBox="0 0 7 8"><path d="M1 .6h3.200L6 2.400v5H1z" fill="#e03030" stroke="#801010" stroke-width=".8"/><rect x="2.300" y="3.500" width="2.400" height="2.400" fill="#501010"/></svg></span>
<span class="tt" style="left:73.8px;top:396.4px;">[1]Main Bound Cond (shar</span>
<svg class="abs" style="left:43.2px;top:408.3px" width="6" height="5" viewBox="0 0 6 5"><path d="M.8 1.200l2.200 2.300 2.200-2.300" stroke="#2a2a2a" stroke-width="1.150" fill="none"/></svg>
<span class="abs" style="left:54.4px;top:406.1px;line-height:0"><svg class="ti" width="7.5" height="8.600" viewBox="0 0 7 8"><path d="M1 .6h3.200L6 2.400v5H1z" fill="#ddd" stroke="#222" stroke-width=".8"/><path d="M2 3.500h3M2 5.200h3" stroke="#444" stroke-width=".5"/></svg></span>
<span class="tt" style="left:64.2px;top:405.8px;">Cas de charges</span>
<span class="abs" style="left:64.0px;top:415.5px;line-height:0"><svg class="ti" width="7.5" height="8.600" viewBox="0 0 7 8"><path d="M1 .6h3.200L6 2.400v5H1z" fill="#fff" stroke="#222" stroke-width=".8"/></svg></span>
<span class="tt" style="left:73.8px;top:415.2px;">[10]Additional Gravity Forc</span>
<span class="abs" style="left:64.0px;top:424.9px;line-height:0"><svg class="ti" width="7.5" height="8.600" viewBox="0 0 7 8"><path d="M1 .6h3.200L6 2.400v5H1z" fill="#fff" stroke="#222" stroke-width=".8"/></svg></span>
<span class="tt" style="left:73.8px;top:424.6px;">[11]Excav Forces (M5)</span>
<span class="abs" style="left:54.4px;top:434.2px;line-height:0"><svg class="ti" width="7.5" height="8.600" viewBox="0 0 7 8"><path d="M1 .6h3.200L6 2.400v5H1z" fill="#fff" stroke="#222" stroke-width=".8"/></svg></span>
<span class="tt" style="left:64.2px;top:433.9px;">[5]Paramètres de calcul</span>
<svg class="abs" style="left:33.3px;top:445.8px" width="6" height="5" viewBox="0 0 6 5"><path d="M.8 1.200l2.200 2.300 2.200-2.300" stroke="#2a2a2a" stroke-width="1.150" fill="none"/></svg>
<span class="abs" style="left:43.3px;top:443.6px;line-height:0"><svg class="ti" width="9" height="9" viewBox="0 0 8 8"><path d="M1 3l1.500-1.500h4L7.500 3v3.500H1z" fill="#6ab878" stroke="#10200c" stroke-width="1"/><path d="M1 3h5v3.500M6 3l1.500-1.500" stroke="#10200c" stroke-width=".6" fill="none"/></svg></span>
<span class="tt" style="left:54.3px;top:443.3px;font-weight:bold;">[6]Excav 3 (Sup)</span>
<span class="abs" style="left:54.4px;top:453.0px;line-height:0"><svg class="ti" width="7.5" height="8.600" viewBox="0 0 7 8"><path d="M1 .6h3.200L6 2.400v5H1z" fill="#fff" stroke="#222" stroke-width=".8"/></svg></span>
<span class="tt" style="left:64.2px;top:452.7px;font-weight:bold;">[6]Properties</span>
<span class="abs" style="left:54.4px;top:462.4px;line-height:0"><svg class="ti" width="7.5" height="8.600" viewBox="0 0 7 8"><path d="M1 .6h3.200L6 2.400v5H1z" fill="#fff" stroke="#222" stroke-width=".8"/></svg></span>
<span class="tt" style="left:64.2px;top:462.1px;font-weight:bold;">[6]Init.Parameters</span>
<span class="abs" style="left:55.9px;top:472.2px;line-height:0;height:3px;overflow:hidden"><svg class="ti" width="7.5" height="8.600" viewBox="0 0 7 8"><path d="M1 .6h3.200L6 2.400v5H1z" fill="#fff" stroke="#222" stroke-width=".8"/></svg></span>
<div class="abs" style="left:147px;top:29px;width:10px;height:453px;background:#fff"></div>
<div class="abs" style="left:150px;top:41px;width:2px;height:70px;background:#b8b8b8;border-radius:1px"></div>
<div class="abs" style="left:11px;top:476px;width:108px;height:1.500px;background:#c4c4c4;border-radius:1px"></div>
</div>
<div id="status" class="abs">
<div class="abs" style="left:161px;top:3px;width:1px;height:9px;background:#ddd"></div>
<div class="abs" style="left:320px;top:3px;width:1px;height:9px;background:#ddd"></div>
<div class="abs" style="left:427px;top:3px;width:1px;height:9px;background:#ddd"></div>
<span class="abs" style="left:324px;top:2.500px;font-size:6.800px;line-height:9px;color:#e8e8e8;white-space:nowrap;transform-origin:0 50%;transform:scaleX(.9)">Mode souris :Sélectionner</span>
</div>
</div>
</body>
</html>
